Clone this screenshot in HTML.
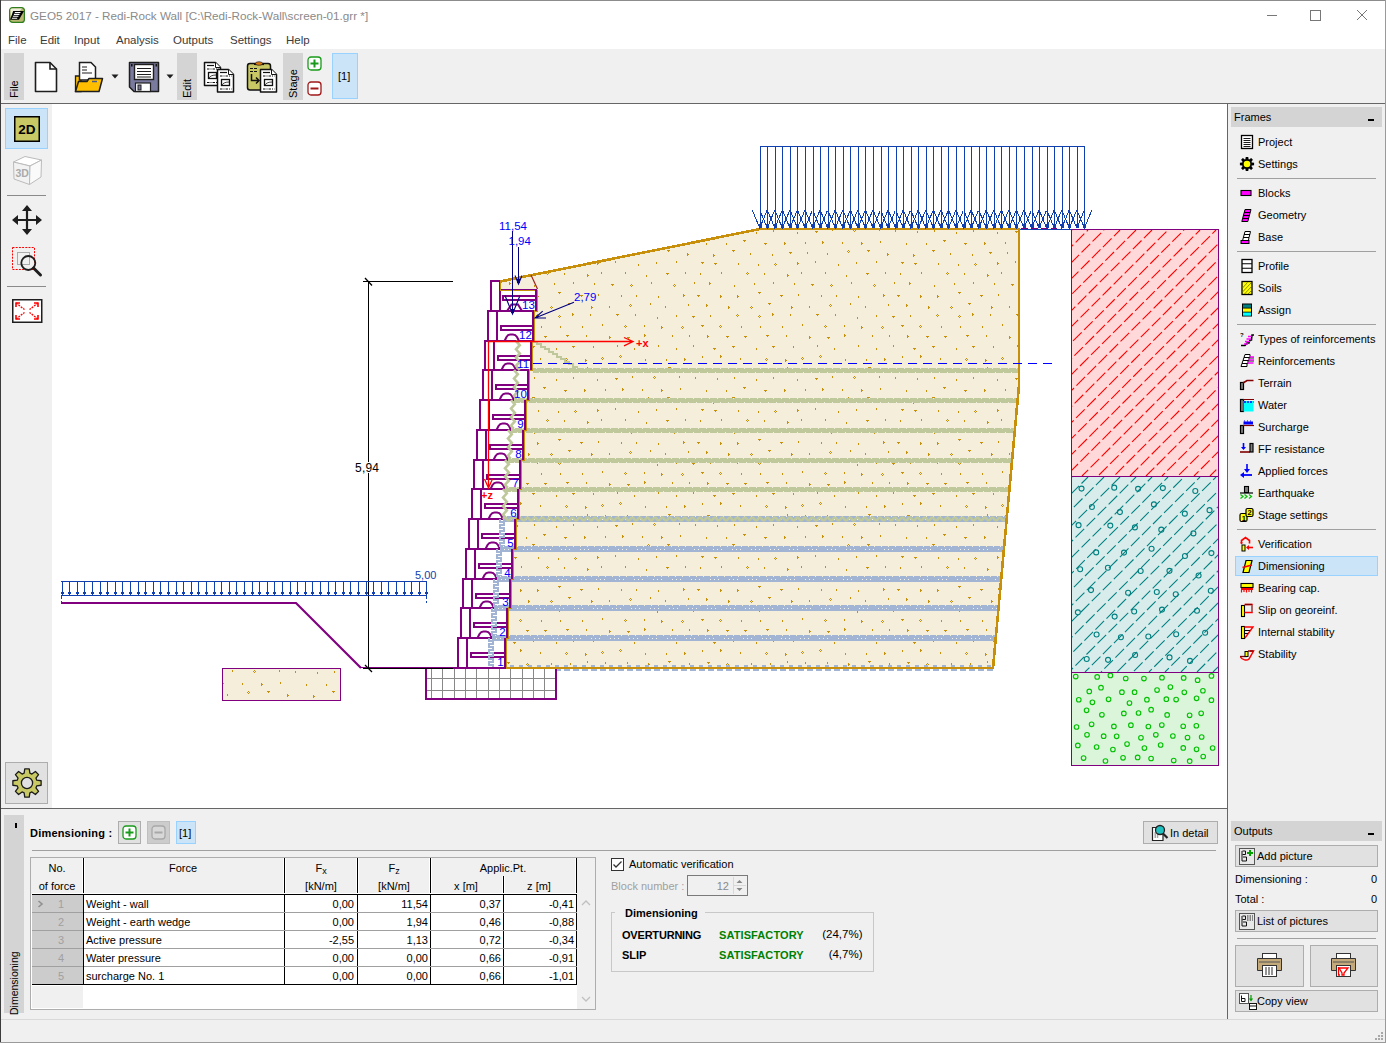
<!DOCTYPE html>
<html><head><meta charset="utf-8">
<style>
*{margin:0;padding:0;box-sizing:border-box}
html,body{width:1386px;height:1043px;overflow:hidden;background:#f0f0f0;font-family:"Liberation Sans",sans-serif;font-size:11px;color:#000}
.a{position:absolute}
.t{position:absolute;white-space:nowrap;line-height:1}
.vt{position:absolute;transform-origin:0 0;transform:rotate(-90deg);white-space:nowrap;line-height:1}
</style></head><body>
<div class="a" style="left:0px;top:0px;width:1386px;height:1px;background:#8c8c8c;"></div><div class="a" style="left:0px;top:0px;width:1px;height:1043px;background:#3c3c3c;"></div><div class="a" style="left:1385px;top:0px;width:1px;height:1043px;background:#9a9a9a;"></div><div class="a" style="left:0px;top:1042px;width:1386px;height:1px;background:#9a9a9a;"></div><div class="a" style="left:1px;top:1px;width:1384px;height:48px;background:#fff;"></div><svg class="a" style="left:9px;top:7px;" width="16" height="16" viewBox="0 0 16 16"><rect x="0.6" y="0.6" width="14.8" height="14.8" rx="3" fill="#b8b870" stroke="#2e7d1e" stroke-width="1.2"/><path d="M1.5 2 Q1.5 1.5 3 1.5 H13 L2 13Z" fill="#eeeedf"/><path d="M4.2 4 H15 L10 12.8 H1Z" fill="#000"/><path d="M5.8 5.5 H11.5 M4.9 7.4 H10.5 M3.9 9.3 H9.4 M2.9 11.3 H8.2" stroke="#fff" stroke-width="1.1"/></svg><div class="t" style="left:30px;top:10.40px;font-size:11.7px;color:#8a8a8a">GEO5 2017 - Redi-Rock Wall [C:\Redi-Rock-Wall\screen-01.grr *]</div><svg class="a" style="left:1265px;top:8px;" width="110" height="16" viewBox="0 0 110 16"><path d="M2 7.5 H12" stroke="#777" stroke-width="1"/><rect x="45.5" y="2.5" width="10" height="10" fill="none" stroke="#777"/><path d="M92 2 L102 12 M102 2 L92 12" stroke="#777" stroke-width="1"/></svg><div class="t" style="left:8px;top:35.47px;font-size:11.5px;color:#3a3a3a">File</div><div class="t" style="left:40px;top:35.47px;font-size:11.5px;color:#3a3a3a">Edit</div><div class="t" style="left:74px;top:35.47px;font-size:11.5px;color:#3a3a3a">Input</div><div class="t" style="left:116px;top:35.47px;font-size:11.5px;color:#3a3a3a">Analysis</div><div class="t" style="left:173px;top:35.47px;font-size:11.5px;color:#3a3a3a">Outputs</div><div class="t" style="left:230px;top:35.47px;font-size:11.5px;color:#3a3a3a">Settings</div><div class="t" style="left:286px;top:35.47px;font-size:11.5px;color:#3a3a3a">Help</div><div class="a" style="left:1px;top:49px;width:1384px;height:54px;background:#f0f0f0;"></div><div class="a" style="left:1px;top:103px;width:1384px;height:1px;background:#666666;"></div><div class="a" style="left:4px;top:53px;width:20px;height:47px;background:#d4d4d4;"></div><div class="a" style="left:177px;top:53px;width:20px;height:47px;background:#d4d4d4;"></div><div class="a" style="left:283px;top:53px;width:20px;height:47px;background:#d4d4d4;"></div><div class="vt" style="left:9px;top:98px;font-size:11px">File</div><div class="vt" style="left:182px;top:98px;font-size:11px">Edit</div><div class="vt" style="left:288px;top:98px;font-size:11px">Stage</div><svg class="a" style="left:34px;top:61px;" width="24" height="32" viewBox="0 0 24 32"><path d="M1.5 1.5 H16 L22.5 8 V30.5 H1.5Z" fill="#fff" stroke="#1e1e1e" stroke-width="1.6" stroke-linejoin="round"/><path d="M16 1.5 V8 H22.5" fill="none" stroke="#1e1e1e" stroke-width="1.6"/></svg><svg class="a" style="left:74px;top:61px;" width="30" height="32" viewBox="0 0 30 32"><path d="M1.5 15 H7 V30.5 H1.5Z" fill="#ffbf00" stroke="#1e1e1e" stroke-width="1.3"/><path d="M5.5 1.5 H17 L21.5 6 V19 H5.5Z" fill="#fff" stroke="#1e1e1e" stroke-width="1.5"/><path d="M8 6 H13 M8 9 H13 M8 12 H18" stroke="#1e1e1e" stroke-width="1.2"/><path d="M4.5 20.5 H13 L15 17.5 H28.5 L25 30.5 H1.5Z" fill="#ffbf00" stroke="#1e1e1e" stroke-width="1.5" stroke-linejoin="round"/><path d="M18 20.5 H23" stroke="#4a5a8a" stroke-width="1.5"/></svg><svg class="a" style="left:111px;top:74px;" width="9" height="6" viewBox="0 0 9 6"><path d="M0.5 0.5 H7.5 L4 4.5Z" fill="#1e1e1e"/></svg><svg class="a" style="left:128px;top:61px;" width="32" height="32" viewBox="0 0 32 32"><path d="M1.5 1.5 H30.5 V30.5 H6 L1.5 26Z" fill="#7a7a9e" stroke="#1e1e1e" stroke-width="1.5" stroke-linejoin="round"/><rect x="6.5" y="3.5" width="19" height="15" fill="#fff" stroke="#1e1e1e" stroke-width="1.4"/><path d="M9 7.5 H23 M9 10.5 H23 M9 13.5 H23 M9 16 H23" stroke="#1e1e1e" stroke-width="1.1"/><rect x="7.5" y="22" width="15" height="8.5" fill="#fff" stroke="#1e1e1e" stroke-width="1.2"/><rect x="10" y="24" width="3" height="5" fill="#7a7a9e" stroke="#1e1e1e" stroke-width="1"/><rect x="3" y="3" width="1.6" height="2.5" fill="#111"/><rect x="27.5" y="3" width="1.6" height="2.5" fill="#111"/></svg><svg class="a" style="left:166px;top:74px;" width="9" height="6" viewBox="0 0 9 6"><path d="M0.5 0.5 H7.5 L4 4.5Z" fill="#1e1e1e"/></svg><svg class="a" style="left:203px;top:61px;" width="34" height="32" viewBox="0 0 34 32"><path d="M1.5 1.5 H12.5 L17.5 6.5 V24.5 H1.5 Z" fill="#fff" stroke="#111" stroke-width="1.5" stroke-linejoin="round"/><path d="M12.5 1.5 V6.5 H17.5" fill="#fff" stroke="#111" stroke-width="1"/><path d="M4.0 4.5 H11.0" stroke="#111" stroke-width="1.2"/><path d="M4.0 8.0 H15.5 M4.0 21.5 H15.5" stroke="#111" stroke-width="1.2" stroke-dasharray="2.5 1 1 1"/><rect x="5.5" y="11.5" width="8" height="6" fill="none" stroke="#111" stroke-width="1.3"/><path d="M6.0 17.0 Q7.5 14.0 13.5 14.0" fill="none" stroke="#111" stroke-width="0.8"/><path d="M14.5 8.5 H25.5 L30.5 13.5 V31.0 H14.5 Z" fill="#fff" stroke="#111" stroke-width="1.5" stroke-linejoin="round"/><path d="M25.5 8.5 V13.5 H30.5" fill="#fff" stroke="#111" stroke-width="1"/><path d="M17.0 11.5 H24.0" stroke="#111" stroke-width="1.2"/><path d="M17.0 15.0 H28.5 M17.0 28.0 H28.5" stroke="#111" stroke-width="1.2" stroke-dasharray="2.5 1 1 1"/><rect x="18.5" y="18.5" width="8" height="6" fill="none" stroke="#111" stroke-width="1.3"/><path d="M19.0 24.0 Q20.5 21.0 26.5 21.0" fill="none" stroke="#111" stroke-width="0.8"/></svg><svg class="a" style="left:246px;top:61px;" width="34" height="32" viewBox="0 0 34 32"><rect x="1.5" y="2.5" width="23" height="26.5" rx="2.5" fill="#c8c864" stroke="#111" stroke-width="1.5"/><path d="M8 3.5 H18" stroke="#111" stroke-width="1.2"/><ellipse cx="13" cy="2.5" rx="3.5" ry="1.8" fill="#d87810" stroke="#111" stroke-width="0.6"/><path d="M4 7.5 H11 M4 10.5 H11" stroke="#111" stroke-width="1.2" stroke-dasharray="3 1"/><path d="M5.5 13 V19.5 H13 M10 16.5 L13 19.5 L10 22.5" fill="none" stroke="#111" stroke-width="1.5"/><path d="M14.5 8.5 H25.5 L30.5 13.5 V31.0 H14.5 Z" fill="#fff" stroke="#111" stroke-width="1.5" stroke-linejoin="round"/><path d="M25.5 8.5 V13.5 H30.5" fill="#fff" stroke="#111" stroke-width="1"/><path d="M17.0 11.5 H24.0" stroke="#111" stroke-width="1.2"/><path d="M17.0 15.0 H28.5 M17.0 28.0 H28.5" stroke="#111" stroke-width="1.2" stroke-dasharray="2.5 1 1 1"/><rect x="18.5" y="18.5" width="8" height="6" fill="none" stroke="#111" stroke-width="1.3"/><path d="M19.0 24.0 Q20.5 21.0 26.5 21.0" fill="none" stroke="#111" stroke-width="0.8"/></svg><svg class="a" style="left:307px;top:56px;" width="16" height="16" viewBox="0 0 16 16"><rect x="1" y="1" width="13" height="13" rx="3" fill="#fff" stroke="#1a9a1a" stroke-width="1.3"/><path d="M7.5 3.5 V11.5 M3.5 7.5 H11.5" stroke="#1a9a1a" stroke-width="2"/></svg><svg class="a" style="left:307px;top:81px;" width="16" height="16" viewBox="0 0 16 16"><rect x="1" y="1" width="13" height="13" rx="3" fill="#fff" stroke="#a01818" stroke-width="1.3"/><path d="M3.5 7.5 H11.5" stroke="#a01818" stroke-width="2"/></svg><div class="a" style="left:332px;top:53px;width:26px;height:46px;background:#cce4f7;border:1px solid #99d1ff"></div><div class="t" style="left:338px;top:71.19px;font-size:11px;">[1]</div><div class="a" style="left:1px;top:104px;width:51px;height:704px;background:#f0f0f0;"></div><div class="a" style="left:5px;top:108px;width:43px;height:41px;background:#cce4f7;border:1px solid #99d1ff"></div><svg class="a" style="left:14px;top:116px;" width="27" height="27" viewBox="0 0 27 27"><rect x="0.75" y="0.75" width="24.5" height="24.5" fill="#c8c864" stroke="#000" stroke-width="1.5"/><text x="13" y="18" text-anchor="middle" font-family="Liberation Sans" font-weight="bold" font-size="13.5" fill="#000">2D</text></svg><svg class="a" style="left:12px;top:155px;" width="31" height="32" viewBox="0 0 31 32"><path d="M1.5 7 L13 1.5 L29.5 5 L18 11Z" fill="#fff" stroke="#bbb" stroke-width="1"/><path d="M1.5 7 L18 11 L17.5 29.5 L2 24Z" fill="#f2f2f2" stroke="#bbb" stroke-width="1"/><path d="M18 11 L29.5 5 L29 22 L17.5 29.5Z" fill="#fafafa" stroke="#bbb" stroke-width="1"/><text x="3.5" y="22" font-family="Liberation Sans" font-weight="bold" font-size="10.5" fill="#aaa">3D</text></svg><div class="a" style="left:7px;top:195px;width:39px;height:1px;background:#8a8a8a;"></div><svg class="a" style="left:12px;top:205px;" width="30" height="30" viewBox="0 0 30 30"><path d="M15 2 V28 M2 15 H28" stroke="#1e1e1e" stroke-width="2.2"/><path d="M15 0 L20 6 H10Z M15 30 L20 24 H10Z M0 15 L6 10 V20Z M30 15 L24 10 V20Z" fill="#1e1e1e"/></svg><svg class="a" style="left:12px;top:247px;" width="31" height="31" viewBox="0 0 31 31"><rect x="0.5" y="0.5" width="22" height="22" fill="none" stroke="#ff0000" stroke-width="1" stroke-dasharray="2 1.2"/><rect x="5.5" y="5.5" width="12" height="12" fill="none" stroke="#aaa" stroke-width="1"/><circle cx="16.3" cy="16" r="7" fill="none" stroke="#1e1e1e" stroke-width="1.8"/><path d="M21.5 21 L28.5 28" stroke="#1e1e1e" stroke-width="3" stroke-linecap="round"/></svg><div class="a" style="left:7px;top:286px;width:39px;height:1px;background:#8a8a8a;"></div><svg class="a" style="left:12px;top:299px;" width="31" height="25" viewBox="0 0 31 25"><rect x="0.75" y="0.75" width="29" height="22.5" fill="#fff" stroke="#1e1e1e" stroke-width="1.5"/><path d="M4 4 L12.5 10.5 M26 4 L17.5 10.5 M4 20 L12.5 13.5 M26 20 L17.5 13.5" stroke="#ff0000" stroke-width="1.3" stroke-dasharray="2 1"/><path d="M4 3.5 V8 M3.5 4 H8 M26 3.5 V8 M26.5 4 H22 M4 20.5 V16 M3.5 20 H8 M26 20.5 V16 M26.5 20 H22" stroke="#ff0000" stroke-width="1.6"/></svg><div class="a" style="left:5px;top:762px;width:43px;height:42px;background:#e1e1e1;border:1px solid #adadad"></div><svg class="a" style="left:11px;top:767px;" width="32" height="32" viewBox="0 0 32 32"><path d="M25.79 13.15 L30.12 13.76 L30.12 18.24 L25.79 18.85 L24.94 20.91 L27.57 24.41 L24.41 27.57 L20.91 24.94 L18.85 25.79 L18.24 30.12 L13.76 30.12 L13.15 25.79 L11.09 24.94 L7.59 27.57 L4.43 24.41 L7.06 20.91 L6.21 18.85 L1.88 18.24 L1.88 13.76 L6.21 13.15 L7.06 11.09 L4.43 7.59 L7.59 4.43 L11.09 7.06 L13.15 6.21 L13.76 1.88 L18.24 1.88 L18.85 6.21 L20.91 7.06 L24.41 4.43 L27.57 7.59 L24.94 11.09Z M16 16 m-5.6 0 a5.6 5.6 0 1 0 11.2 0 a5.6 5.6 0 1 0 -11.2 0Z" fill="#c8c864" stroke="#1a1a1a" stroke-width="1.3" stroke-linejoin="round" fill-rule="evenodd"/></svg><div class="a" style="left:52px;top:104px;width:1175px;height:704px;background:#fff;"></div><svg class="a" style="left:0;top:0" width="1386" height="1043" viewBox="0 0 1386 1043" font-family="Liberation Sans, sans-serif"><defs><pattern id="soil" patternUnits="userSpaceOnUse" x="0" y="0" width="200" height="147"><rect width="200" height="147" fill="#f5eedb"/><g fill="#c8900a"><rect x="198" y="0" width="1" height="2"/><rect x="21" y="1" width="1" height="2"/><rect x="36" y="1" width="1" height="2"/><rect x="58" y="2" width="1" height="2"/><path d="M83 0h1v3h-1z M84 1h1v1h-1z"/><path d="M97 1h3v1h-1v1h-1v-1h-1z"/><path d="M120 1h1v3h-1z M121 2h1v1h-1z"/><path d="M137 1h1v3h-1z M138 2h1v1h-1z"/><path d="M158 145h3v1h-1v1h-1v-1h-1z"/><path d="M180 1h3v1h-1v1h-1v-1h-1z"/><rect x="9" y="12" width="1" height="2"/><path d="M30 10h1v1h-1z M29 11h1v1h-1z M31 11h1v1h-1z M30 12h1v1h-1z"/><rect x="50" y="9" width="1" height="2"/><rect x="65" y="12" width="1" height="2"/><rect x="88" y="10" width="1" height="2"/><path d="M106 10h1v3h-1z M107 11h1v1h-1z"/><path d="M128 12h1v3h-1z M129 13h1v1h-1z"/><path d="M151 12h1v1h-1z M150 13h1v1h-1z M152 13h1v1h-1z M151 14h1v1h-1z"/><path d="M168 9h3v1h-1v1h-1v-1h-1z"/><path d="M191 12h1v3h-1z M192 13h1v1h-1z"/><path d="M16 20h3v1h-1v1h-1v-1h-1z"/><rect x="35" y="20" width="1" height="2"/><rect x="57" y="23" width="1" height="2"/><rect x="76" y="21" width="1" height="2"/><path d="M92 22h3v1h-1v1h-1v-1h-1z"/><rect x="110" y="21" width="1" height="2"/><path d="M137 20h1v1h-1z M136 21h1v1h-1z M138 21h1v1h-1z M137 22h1v1h-1z"/><path d="M159 21h1v1h-1z M158 22h1v1h-1z M160 22h1v1h-1z M159 23h1v1h-1z"/><path d="M172 19h1v3h-1z M173 20h1v1h-1z"/><rect x="190" y="20" width="1" height="2"/><rect x="2" y="30" width="1" height="2"/><path d="M25 31h1v1h-1z M24 32h1v1h-1z M26 32h1v1h-1z M25 33h1v1h-1z"/><rect x="44" y="31" width="1" height="2"/><path d="M61 32h1v3h-1z M62 33h1v1h-1z"/><path d="M82 32h1v1h-1z M81 33h1v1h-1z M83 33h1v1h-1z M82 34h1v1h-1z"/><path d="M101 31h3v1h-1v1h-1v-1h-1z"/><path d="M120 31h1v1h-1z M119 32h1v1h-1z M121 32h1v1h-1z M120 33h1v1h-1z"/><rect x="141" y="32" width="1" height="2"/><rect x="160" y="32" width="1" height="2"/><rect x="182" y="32" width="1" height="2"/><path d="M9 42h1v3h-1z M10 43h1v1h-1z"/><path d="M27 43h3v1h-1v1h-1v-1h-1z"/><path d="M44 40h1v3h-1z M45 41h1v1h-1z"/><rect x="72" y="41" width="1" height="2"/><rect x="89" y="41" width="1" height="2"/><path d="M107 41h1v3h-1z M108 42h1v1h-1z"/><path d="M126 42h3v1h-1v1h-1v-1h-1z"/><path d="M144 42h3v1h-1v1h-1v-1h-1z"/><path d="M166 41h3v1h-1v1h-1v-1h-1z"/><rect x="186" y="41" width="1" height="2"/><rect x="17" y="51" width="1" height="2"/><rect x="34" y="54" width="1" height="2"/><rect x="58" y="51" width="1" height="2"/><rect x="76" y="54" width="1" height="2"/><rect x="93" y="51" width="1" height="2"/><path d="M113 54h3v1h-1v1h-1v-1h-1z"/><path d="M132 52h3v1h-1v1h-1v-1h-1z"/><rect x="156" y="54" width="1" height="2"/><path d="M172 52h3v1h-1v1h-1v-1h-1z"/><rect x="193" y="52" width="1" height="2"/><path d="M2 63h1v1h-1z M1 64h1v1h-1z M3 64h1v1h-1z M2 65h1v1h-1z"/><path d="M20 61h1v1h-1z M19 62h1v1h-1z M21 62h1v1h-1z M20 63h1v1h-1z"/><rect x="45" y="65" width="1" height="2"/><rect x="66" y="65" width="1" height="2"/><path d="M84 64h1v3h-1z M85 65h1v1h-1z"/><rect x="102" y="62" width="1" height="2"/><path d="M120 61h1v3h-1z M121 62h1v1h-1z"/><rect x="140" y="64" width="1" height="2"/><path d="M166 64h1v1h-1z M165 65h1v1h-1z M167 65h1v1h-1z M166 66h1v1h-1z"/><path d="M185 65h1v3h-1z M186 66h1v1h-1z"/><rect x="5" y="74" width="1" height="2"/><rect x="27" y="74" width="1" height="2"/><path d="M48 75h1v3h-1z M49 76h1v1h-1z"/><path d="M68 73h3v1h-1v1h-1v-1h-1z"/><rect x="89" y="75" width="1" height="2"/><path d="M107 74h3v1h-1v1h-1v-1h-1z"/><path d="M127 75h1v1h-1z M126 76h1v1h-1z M128 76h1v1h-1z M127 77h1v1h-1z"/><rect x="151" y="75" width="1" height="2"/><rect x="170" y="75" width="1" height="2"/><rect x="187" y="73" width="1" height="2"/><path d="M15 84h3v1h-1v1h-1v-1h-1z"/><rect x="32" y="82" width="1" height="2"/><path d="M54 82h1v1h-1z M53 83h1v1h-1z M55 83h1v1h-1z M54 84h1v1h-1z"/><rect x="79" y="82" width="1" height="2"/><rect x="95" y="83" width="1" height="2"/><rect x="117" y="84" width="1" height="2"/><rect x="134" y="83" width="1" height="2"/><rect x="156" y="85" width="1" height="2"/><rect x="173" y="83" width="1" height="2"/><rect x="197" y="85" width="1" height="2"/><rect x="5" y="95" width="1" height="2"/><path d="M22 94h1v3h-1z M23 95h1v1h-1z"/><rect x="42" y="95" width="1" height="2"/><path d="M61 95h1v3h-1z M62 96h1v1h-1z"/><rect x="80" y="94" width="1" height="2"/><rect x="106" y="96" width="1" height="2"/><rect x="126" y="96" width="1" height="2"/><path d="M143 93h3v1h-1v1h-1v-1h-1z"/><path d="M164 96h3v1h-1v1h-1v-1h-1z"/><path d="M184 95h1v3h-1z M185 96h1v1h-1z"/><rect x="7" y="105" width="1" height="2"/><rect x="27" y="106" width="1" height="2"/><path d="M48 103h1v1h-1z M47 104h1v1h-1z M49 104h1v1h-1z M48 105h1v1h-1z"/><path d="M67 103h3v1h-1v1h-1v-1h-1z"/><path d="M87 106h1v3h-1z M88 107h1v1h-1z"/><path d="M113 107h1v3h-1z M114 108h1v1h-1z"/><path d="M132 103h3v1h-1v1h-1v-1h-1z"/><rect x="150" y="106" width="1" height="2"/><rect x="172" y="107" width="1" height="2"/><path d="M189 105h3v1h-1v1h-1v-1h-1z"/><rect x="15" y="114" width="1" height="2"/><rect x="38" y="117" width="1" height="2"/><rect x="56" y="115" width="1" height="2"/><rect x="76" y="114" width="1" height="2"/><path d="M101 115h3v1h-1v1h-1v-1h-1z"/><path d="M114 116h3v1h-1v1h-1v-1h-1z"/><rect x="138" y="116" width="1" height="2"/><rect x="158" y="117" width="1" height="2"/><path d="M175 116h1v1h-1z M174 117h1v1h-1z M176 117h1v1h-1z M175 118h1v1h-1z"/><path d="M197 115h1v3h-1z M198 116h1v1h-1z"/><rect x="1" y="125" width="1" height="2"/><rect x="25" y="125" width="1" height="2"/><rect x="46" y="128" width="1" height="2"/><path d="M66 126h3v1h-1v1h-1v-1h-1z"/><rect x="85" y="125" width="1" height="2"/><rect x="100" y="126" width="1" height="2"/><rect x="121" y="125" width="1" height="2"/><path d="M147 125h1v1h-1z M146 126h1v1h-1z M148 126h1v1h-1z M147 127h1v1h-1z"/><rect x="164" y="126" width="1" height="2"/><path d="M187 127h1v3h-1z M188 128h1v1h-1z"/><path d="M11 137h3v1h-1v1h-1v-1h-1z"/><path d="M31 137h1v1h-1z M30 138h1v1h-1z M32 138h1v1h-1z M31 139h1v1h-1z"/><rect x="51" y="135" width="1" height="2"/><path d="M74 137h1v1h-1z M73 138h1v1h-1z M75 138h1v1h-1z M74 139h1v1h-1z"/><rect x="94" y="135" width="1" height="2"/><path d="M109 135h1v3h-1z M110 136h1v1h-1z"/><rect x="134" y="138" width="1" height="2"/><rect x="154" y="136" width="1" height="2"/><rect x="173" y="135" width="1" height="2"/><rect x="194" y="136" width="1" height="2"/></g></pattern><pattern id="pink" patternUnits="userSpaceOnUse" width="12" height="12"><rect width="12" height="12" fill="#ffd9d9"/><path d="M-3 15L15 -3" stroke="#ff0000" stroke-width="1.1" stroke-dasharray="8 4.5"/></pattern><pattern id="cyan" patternUnits="userSpaceOnUse" width="12" height="12"><rect width="12" height="12" fill="#d9ecec"/><path d="M-3 15L15 -3" stroke="#008080" stroke-width="1.1" stroke-dasharray="8 4.5"/></pattern><clipPath id="cv"><rect x="52" y="104" width="1175" height="704"/></clipPath></defs><g clip-path="url(#cv)" shape-rendering="crispEdges"><path d="M499 281 L760 229 L1019 229 L1019 385 L993 668 L506 668 L506 638 L508 638 L508 608 L511 608 L511 579 L513 579 L513 549 L516 549 L516 519 L519 519 L519 489 L521 489 L521 460 L524 460 L524 430 L526 430 L526 400 L529 400 L529 370 L532 370 L532 341 L534 341 L534 311 L537 311 L537 290 L499 290Z" fill="url(#soil)"/><rect x="222.5" y="668.5" width="118" height="32" fill="url(#soil)" stroke="#800080" stroke-width="1.5"/><path d="M492 670 H995" stroke="#a2b4d4" stroke-width="2" stroke-dasharray="6 3"/><path d="M492 666 H995" stroke="#a2b4d4" stroke-width="1.5" stroke-dasharray="4 5"/><path d="M533 342 H537 V344 H541 V347 H545 V349 H549 V352 H553 V354 H557 V357 H561 V359 H565 V362 H569 V364 H573 V367 H577 V369 H581 V372 H592" fill="none" stroke="#bec89a" stroke-width="2.5"/><rect x="458" y="638" width="47" height="30" fill="#fff" stroke="#800080" stroke-width="2"/><path d="M467 638 V668" stroke="#800080" stroke-width="2"/><path d="M471 653 H505 M471 657 H505 M471 652 V658" stroke="#800080" stroke-width="2" fill="none"/><rect x="461" y="608" width="46" height="30" fill="#fff" stroke="#800080" stroke-width="2"/><path d="M470 608 V638" stroke="#800080" stroke-width="2"/><path d="M474 623 H507 M474 627 H507 M474 622 V628" stroke="#800080" stroke-width="2" fill="none"/><path d="M477.5 638 L479.5 634 Q481 631.5 483.5 631.5 H486 Q488.5 631.5 490 634 L492 638" fill="none" stroke="#800080" stroke-width="2" shape-rendering="auto"/><rect x="463" y="579" width="47" height="29" fill="#fff" stroke="#800080" stroke-width="2"/><path d="M472 579 V608" stroke="#800080" stroke-width="2"/><path d="M476 594 H510 M476 598 H510 M476 593 V599" stroke="#800080" stroke-width="2" fill="none"/><path d="M479.5 608 L481.5 604 Q483 601.5 485.5 601.5 H488 Q490.5 601.5 492 604 L494 608" fill="none" stroke="#800080" stroke-width="2" shape-rendering="auto"/><rect x="466" y="549" width="46" height="30" fill="#fff" stroke="#800080" stroke-width="2"/><path d="M475 549 V579" stroke="#800080" stroke-width="2"/><path d="M479 564 H512 M479 568 H512 M479 563 V569" stroke="#800080" stroke-width="2" fill="none"/><path d="M482.5 579 L484.5 575 Q486 572.5 488.5 572.5 H491 Q493.5 572.5 495 575 L497 579" fill="none" stroke="#800080" stroke-width="2" shape-rendering="auto"/><rect x="469" y="519" width="46" height="30" fill="#fff" stroke="#800080" stroke-width="2"/><path d="M478 519 V549" stroke="#800080" stroke-width="2"/><path d="M482 534 H515 M482 538 H515 M482 533 V539" stroke="#800080" stroke-width="2" fill="none"/><path d="M485.5 549 L487.5 545 Q489 542.5 491.5 542.5 H494 Q496.5 542.5 498 545 L500 549" fill="none" stroke="#800080" stroke-width="2" shape-rendering="auto"/><rect x="472" y="489" width="46" height="30" fill="#fff" stroke="#800080" stroke-width="2"/><path d="M481 489 V519" stroke="#800080" stroke-width="2"/><path d="M485 504 H518 M485 508 H518 M485 503 V509" stroke="#800080" stroke-width="2" fill="none"/><path d="M488.5 519 L490.5 515 Q492 512.5 494.5 512.5 H497 Q499.5 512.5 501 515 L503 519" fill="none" stroke="#800080" stroke-width="2" shape-rendering="auto"/><rect x="474" y="460" width="46" height="29" fill="#fff" stroke="#800080" stroke-width="2"/><path d="M483 460 V489" stroke="#800080" stroke-width="2"/><path d="M487 475 H520 M487 479 H520 M487 474 V480" stroke="#800080" stroke-width="2" fill="none"/><path d="M490.5 489 L492.5 485 Q494 482.5 496.5 482.5 H499 Q501.5 482.5 503 485 L505 489" fill="none" stroke="#800080" stroke-width="2" shape-rendering="auto"/><rect x="477" y="430" width="46" height="30" fill="#fff" stroke="#800080" stroke-width="2"/><path d="M486 430 V460" stroke="#800080" stroke-width="2"/><path d="M490 445 H523 M490 449 H523 M490 444 V450" stroke="#800080" stroke-width="2" fill="none"/><path d="M493.5 460 L495.5 456 Q497 453.5 499.5 453.5 H502 Q504.5 453.5 506 456 L508 460" fill="none" stroke="#800080" stroke-width="2" shape-rendering="auto"/><rect x="480" y="400" width="45" height="30" fill="#fff" stroke="#800080" stroke-width="2"/><path d="M489 400 V430" stroke="#800080" stroke-width="2"/><path d="M493 415 H525 M493 419 H525 M493 414 V420" stroke="#800080" stroke-width="2" fill="none"/><path d="M496.5 430 L498.5 426 Q500 423.5 502.5 423.5 H505 Q507.5 423.5 509 426 L511 430" fill="none" stroke="#800080" stroke-width="2" shape-rendering="auto"/><rect x="483" y="370" width="45" height="30" fill="#fff" stroke="#800080" stroke-width="2"/><path d="M492 370 V400" stroke="#800080" stroke-width="2"/><path d="M496 385 H528 M496 389 H528 M496 384 V390" stroke="#800080" stroke-width="2" fill="none"/><path d="M499.5 400 L501.5 396 Q503 393.5 505.5 393.5 H508 Q510.5 393.5 512 396 L514 400" fill="none" stroke="#800080" stroke-width="2" shape-rendering="auto"/><rect x="485" y="341" width="46" height="29" fill="#fff" stroke="#800080" stroke-width="2"/><path d="M494 341 V370" stroke="#800080" stroke-width="2"/><path d="M498 356 H531 M498 360 H531 M498 355 V361" stroke="#800080" stroke-width="2" fill="none"/><path d="M501.5 370 L503.5 366 Q505 363.5 507.5 363.5 H510 Q512.5 363.5 514 366 L516 370" fill="none" stroke="#800080" stroke-width="2" shape-rendering="auto"/><rect x="488" y="311" width="45" height="30" fill="#fff" stroke="#800080" stroke-width="2"/><path d="M497 311 V341" stroke="#800080" stroke-width="2"/><path d="M501 326 H533 M501 330 H533 M501 325 V331" stroke="#800080" stroke-width="2" fill="none"/><path d="M504.5 341 L506.5 337 Q508 334.5 510.5 334.5 H513 Q515.5 334.5 517 337 L519 341" fill="none" stroke="#800080" stroke-width="2" shape-rendering="auto"/><path d="M489 638 V641 H493 V644 H489 V647 H493 V650 H489 V653 H493 V656 H489 V659 H493 V662 H489 V665 H493 V668 H489" fill="none" stroke="#a2b4d4" stroke-width="2"/><path d="M492 608 V611 H496 V614 H492 V617 H496 V620 H492 V623 H496 V626 H492 V629 H496 V632 H492 V635 H496 V638 H492" fill="none" stroke="#a2b4d4" stroke-width="2"/><path d="M494 579 V582 H498 V585 H494 V588 H498 V591 H494 V594 H498 V597 H494 V600 H498 V603 H494 V606 H498 V608 H494" fill="none" stroke="#a2b4d4" stroke-width="2"/><path d="M497 549 V552 H501 V555 H497 V558 H501 V561 H497 V564 H501 V567 H497 V570 H501 V573 H497 V576 H501 V579 H497" fill="none" stroke="#a2b4d4" stroke-width="2"/><path d="M500 519 V522 H504 V525 H500 V528 H504 V531 H500 V534 H504 V537 H500 V540 H504 V543 H500 V546 H504 V549 H500" fill="none" stroke="#a2b4d4" stroke-width="2"/><path d="M503 489 L506.8 493.29 L503 497.57 L506.8 501.86 L503 506.14 L506.8 510.43 L503 514.71 L506.8 519" fill="none" stroke="#bec89a" stroke-width="2.6" shape-rendering="auto"/><path d="M505 460 L508.8 464.14 L505 468.29 L508.8 472.43 L505 476.57 L508.8 480.71 L505 484.86 L508.8 489" fill="none" stroke="#bec89a" stroke-width="2.6" shape-rendering="auto"/><path d="M508 430 L511.8 434.29 L508 438.57 L511.8 442.86 L508 447.14 L511.8 451.43 L508 455.71 L511.8 460" fill="none" stroke="#bec89a" stroke-width="2.6" shape-rendering="auto"/><path d="M511 400 L514.8 404.29 L511 408.57 L514.8 412.86 L511 417.14 L514.8 421.43 L511 425.71 L514.8 430" fill="none" stroke="#bec89a" stroke-width="2.6" shape-rendering="auto"/><path d="M514 370 L517.8 374.29 L514 378.57 L517.8 382.86 L514 387.14 L517.8 391.43 L514 395.71 L517.8 400" fill="none" stroke="#bec89a" stroke-width="2.6" shape-rendering="auto"/><path d="M516 341 L519.8 345.14 L516 349.29 L519.8 353.43 L516 357.57 L519.8 361.71 L516 365.86 L519.8 370" fill="none" stroke="#bec89a" stroke-width="2.6" shape-rendering="auto"/><rect x="492" y="635" width="503.76" height="6" fill="#a2b4d4"/><path d="M496 638.5 H993.76" stroke="#f5f5f0" stroke-width="1" stroke-dasharray="1 3 1 3 1 10"/><path d="M495 635.5 H993.76" stroke="#f2eedc" stroke-width="1" stroke-dasharray="1 6"/><rect x="494" y="605" width="504.51" height="6" fill="#a2b4d4"/><path d="M498 608.5 H996.51" stroke="#f5f5f0" stroke-width="1" stroke-dasharray="1 3 1 3 1 10"/><path d="M497 605.5 H996.51" stroke="#f2eedc" stroke-width="1" stroke-dasharray="1 6"/><rect x="497" y="576" width="504.18" height="6" fill="#a2b4d4"/><path d="M501 579.5 H999.18" stroke="#f5f5f0" stroke-width="1" stroke-dasharray="1 3 1 3 1 10"/><path d="M500 576.5 H999.18" stroke="#f2eedc" stroke-width="1" stroke-dasharray="1 6"/><rect x="500" y="546" width="503.93" height="6" fill="#a2b4d4"/><path d="M504 549.5 H1001.93" stroke="#f5f5f0" stroke-width="1" stroke-dasharray="1 3 1 3 1 10"/><path d="M503 546.5 H1001.93" stroke="#f2eedc" stroke-width="1" stroke-dasharray="1 6"/><rect x="503" y="516" width="503.69" height="6" fill="#a2b4d4"/><path d="M507 519.5 H1004.69" stroke="#f5f5f0" stroke-width="1" stroke-dasharray="1 3 1 3 1 10"/><path d="M506 516.5 H1004.69" stroke="#f2eedc" stroke-width="1" stroke-dasharray="1 6"/><path d="M503 519 Q504.9 516 506.75 519 Q508.6 522 510.5 519 Q512.4 516 514.25 519 Q516.1 522 518 519 Q519.9 516 521.75 519 Q523.6 522 525.5 519 Q527.4 516 529.25 519 Q531.1 522 533 519 Q534.9 516 536.75 519 Q538.6 522 540.5 519 Q542.4 516 544.25 519 Q546.1 522 548 519 Q549.9 516 551.75 519 Q553.6 522 555.5 519 Q557.4 516 559.25 519 Q561.1 522 563 519 Q564.9 516 566.75 519 Q568.6 522 570.5 519 Q572.4 516 574.25 519 Q576.1 522 578 519 Q579.9 516 581.75 519 Q583.6 522 585.5 519 Q587.4 516 589.25 519 Q591.1 522 593 519 Q594.9 516 596.75 519 Q598.6 522 600.5 519 Q602.4 516 604.25 519 Q606.1 522 608 519 Q609.9 516 611.75 519 Q613.6 522 615.5 519 Q617.4 516 619.25 519 Q621.1 522 623 519 Q624.9 516 626.75 519 Q628.6 522 630.5 519 Q632.4 516 634.25 519 Q636.1 522 638 519 Q639.9 516 641.75 519 Q643.6 522 645.5 519 Q647.4 516 649.25 519 Q651.1 522 653 519 Q654.9 516 656.75 519 Q658.6 522 660.5 519 Q662.4 516 664.25 519 Q666.1 522 668 519 Q669.9 516 671.75 519 Q673.6 522 675.5 519 Q677.4 516 679.25 519 Q681.1 522 683 519 Q684.9 516 686.75 519 Q688.6 522 690.5 519 Q692.4 516 694.25 519 Q696.1 522 698 519 Q699.9 516 701.75 519 Q703.6 522 705.5 519 Q707.4 516 709.25 519 Q711.1 522 713 519 Q714.9 516 716.75 519 Q718.6 522 720.5 519 Q722.4 516 724.25 519 Q726.1 522 728 519 Q729.9 516 731.75 519 Q733.6 522 735.5 519 Q737.4 516 739.25 519 Q741.1 522 743 519 Q744.9 516 746.75 519 Q748.6 522 750.5 519 Q752.4 516 754.25 519 Q756.1 522 758 519 Q759.9 516 761.75 519 Q763.6 522 765.5 519 Q767.4 516 769.25 519 Q771.1 522 773 519 Q774.9 516 776.75 519 Q778.6 522 780.5 519 Q782.4 516 784.25 519 Q786.1 522 788 519 Q789.9 516 791.75 519 Q793.6 522 795.5 519 Q797.4 516 799.25 519 Q801.1 522 803 519 Q804.9 516 806.75 519 Q808.6 522 810.5 519 Q812.4 516 814.25 519 Q816.1 522 818 519 Q819.9 516 821.75 519 Q823.6 522 825.5 519 Q827.4 516 829.25 519 Q831.1 522 833 519 Q834.9 516 836.75 519 Q838.6 522 840.5 519 Q842.4 516 844.25 519 Q846.1 522 848 519 Q849.9 516 851.75 519 Q853.6 522 855.5 519 Q857.4 516 859.25 519 Q861.1 522 863 519 Q864.9 516 866.75 519 Q868.6 522 870.5 519 Q872.4 516 874.25 519 Q876.1 522 878 519 Q879.9 516 881.75 519 Q883.6 522 885.5 519 Q887.4 516 889.25 519 Q891.1 522 893 519 Q894.9 516 896.75 519 Q898.6 522 900.5 519 Q902.4 516 904.25 519 Q906.1 522 908 519 Q909.9 516 911.75 519 Q913.6 522 915.5 519 Q917.4 516 919.25 519 Q921.1 522 923 519 Q924.9 516 926.75 519 Q928.6 522 930.5 519 Q932.4 516 934.25 519 Q936.1 522 938 519 Q939.9 516 941.75 519 Q943.6 522 945.5 519 Q947.4 516 949.25 519 Q951.1 522 953 519 Q954.9 516 956.75 519 Q958.6 522 960.5 519 Q962.4 516 964.25 519 Q966.1 522 968 519 Q969.9 516 971.75 519 Q973.6 522 975.5 519 Q977.4 516 979.25 519 Q981.1 522 983 519 Q984.9 516 986.75 519 Q988.6 522 990.5 519 Q992.4 516 994.25 519 Q996.1 522 998 519 Q999.9 516 1001.75 519 Q1003.6 522 1005.5 519" fill="none" stroke="#bec89a" stroke-width="2.6" shape-rendering="auto"/><rect x="505" y="487" width="504.45" height="5" fill="#bec89a"/><path d="M508 487.5 H1007.45 M511 491.5 H1007.45" stroke="#f2eedc" stroke-width="1" stroke-dasharray="1 7"/><rect x="508" y="458" width="504.11" height="5" fill="#bec89a"/><path d="M511 458.5 H1010.11 M514 462.5 H1010.11" stroke="#f2eedc" stroke-width="1" stroke-dasharray="1 7"/><rect x="511" y="428" width="503.87" height="5" fill="#bec89a"/><path d="M514 428.5 H1012.87 M517 432.5 H1012.87" stroke="#f2eedc" stroke-width="1" stroke-dasharray="1 7"/><rect x="514" y="398" width="503.62" height="5" fill="#bec89a"/><path d="M517 398.5 H1015.62 M520 402.5 H1015.62" stroke="#f2eedc" stroke-width="1" stroke-dasharray="1 7"/><rect x="533" y="368" width="486" height="5" fill="#bec89a"/><path d="M536 368.5 H1017 M539 372.5 H1017" stroke="#f2eedc" stroke-width="1" stroke-dasharray="1 7"/><rect x="491" y="281" width="9" height="30" fill="#fff" stroke="#800080" stroke-width="2"/><rect x="500" y="290" width="36" height="21" fill="#fff" stroke="#800080" stroke-width="2"/><path d="M503 296 H536 M503 300 H536 M503 295 V301" stroke="#800080" stroke-width="2" fill="none"/><path d="M507 311 L511.5 304.5 H518 L522 311" fill="none" stroke="#800080" stroke-width="2" shape-rendering="auto"/><rect x="426" y="668" width="130" height="31" fill="#fff"/><path d="M431.5 669 V699 M442.5 669 V699 M454.5 669 V699 M465.5 669 V699 M476.5 669 V699 M488.5 669 V699 M499.5 669 V699 M510.5 669 V699 M522.5 669 V699 M533.5 669 V699 M544.5 669 V699 M427 678.5 H555 M427 690.5 H555" stroke="#888" stroke-width="1"/><rect x="426" y="668" width="130" height="31" fill="none" stroke="#800080" stroke-width="2"/><path d="M500 281.5 L760 229 L1019 229 L1019 385 L993 668 L506 668" fill="none" stroke="#c8900a" stroke-width="2.6"/><path d="M506.5 668 L506.5 638 L508.5 638 L508.5 608 L511.5 608 L511.5 579 L513.5 579 L513.5 549 L516.5 549 L516.5 519 L519.5 519 L519.5 489 L521.5 489 L521.5 460 L524.5 460 L524.5 430 L526.5 430 L526.5 400 L529.5 400 L529.5 370 L532.5 370 L532.5 341 L534.5 341 L534.5 311 L537.5 311 L537.5 290" fill="none" stroke="#c8900a" stroke-width="1.4"/><path d="M500 290.5 H536 M500.5 282 V290" stroke="#c8900a" stroke-width="1.2"/><path d="M505 638 V668" stroke="#800080" stroke-width="2"/><path d="M507 608 V638" stroke="#800080" stroke-width="2"/><path d="M510 579 V608" stroke="#800080" stroke-width="2"/><path d="M512 549 V579" stroke="#800080" stroke-width="2"/><path d="M515 519 V549" stroke="#800080" stroke-width="2"/><path d="M518 489 V519" stroke="#800080" stroke-width="2"/><path d="M520 460 V489" stroke="#800080" stroke-width="2"/><path d="M523 430 V460" stroke="#800080" stroke-width="2"/><path d="M525 400 V430" stroke="#800080" stroke-width="2"/><path d="M528 370 V400" stroke="#800080" stroke-width="2"/><path d="M531 341 V370" stroke="#800080" stroke-width="2"/><path d="M533 311 V341" stroke="#800080" stroke-width="2"/><path d="M536 290 V311" stroke="#800080" stroke-width="2"/><path d="M531 275 L537.5 289" stroke="#a02020" stroke-width="1.2" shape-rendering="auto"/><path d="M61 603 H296 L361 668" fill="none" stroke="#800080" stroke-width="2.2" shape-rendering="auto"/><path d="M361 667.5 H458" stroke="#800080" stroke-width="1"/><path d="M363 668.5 H453" stroke="#000" stroke-width="1"/><path d="M368.5 281 V668 M363 281.5 H453" stroke="#000" stroke-width="1.5"/><path d="M365 278 L372 285.5 M365 665 L372 672" stroke="#000" stroke-width="1.3" shape-rendering="auto"/><rect x="355" y="462" width="26" height="11" fill="#fff"/><text x="355" y="472" font-size="12" fill="#000" textLength="24">5,94</text><path d="M62.5 582 V595 M69.5 582 V595 M77.5 582 V595 M84.5 582 V595 M92.5 582 V595 M100.5 582 V595 M107.5 582 V595 M115.5 582 V595 M122.5 582 V595 M130.5 582 V595 M138.5 582 V595 M145.5 582 V595 M153.5 582 V595 M160.5 582 V595 M168.5 582 V595 M176.5 582 V595 M183.5 582 V595 M191.5 582 V595 M198.5 582 V595 M206.5 582 V595 M214.5 582 V595 M221.5 582 V595 M229.5 582 V595 M236.5 582 V595 M244.5 582 V595 M252.5 582 V595 M259.5 582 V595 M267.5 582 V595 M274.5 582 V595 M282.5 582 V595 M290.5 582 V595 M297.5 582 V595 M305.5 582 V595 M312.5 582 V595 M320.5 582 V595 M328.5 582 V595 M335.5 582 V595 M343.5 582 V595 M350.5 582 V595 M358.5 582 V595 M366.5 582 V595 M373.5 582 V595 M381.5 582 V595 M388.5 582 V595 M396.5 582 V595 M404.5 582 V595 M411.5 582 V595 M419.5 582 V595 M426.5 582 V595 M61 581.5 H427 M61 595.5 H427" stroke="#1040b0" stroke-width="1.2" fill="none"/><g fill="#1040b0"><rect x="61" y="592" width="3" height="2"/><rect x="68" y="592" width="3" height="2"/><rect x="76" y="592" width="3" height="2"/><rect x="83" y="592" width="3" height="2"/><rect x="91" y="592" width="3" height="2"/><rect x="99" y="592" width="3" height="2"/><rect x="106" y="592" width="3" height="2"/><rect x="114" y="592" width="3" height="2"/><rect x="121" y="592" width="3" height="2"/><rect x="129" y="592" width="3" height="2"/><rect x="137" y="592" width="3" height="2"/><rect x="144" y="592" width="3" height="2"/><rect x="152" y="592" width="3" height="2"/><rect x="159" y="592" width="3" height="2"/><rect x="167" y="592" width="3" height="2"/><rect x="175" y="592" width="3" height="2"/><rect x="182" y="592" width="3" height="2"/><rect x="190" y="592" width="3" height="2"/><rect x="197" y="592" width="3" height="2"/><rect x="205" y="592" width="3" height="2"/><rect x="213" y="592" width="3" height="2"/><rect x="220" y="592" width="3" height="2"/><rect x="228" y="592" width="3" height="2"/><rect x="235" y="592" width="3" height="2"/><rect x="243" y="592" width="3" height="2"/><rect x="251" y="592" width="3" height="2"/><rect x="258" y="592" width="3" height="2"/><rect x="266" y="592" width="3" height="2"/><rect x="273" y="592" width="3" height="2"/><rect x="281" y="592" width="3" height="2"/><rect x="289" y="592" width="3" height="2"/><rect x="296" y="592" width="3" height="2"/><rect x="304" y="592" width="3" height="2"/><rect x="311" y="592" width="3" height="2"/><rect x="319" y="592" width="3" height="2"/><rect x="327" y="592" width="3" height="2"/><rect x="334" y="592" width="3" height="2"/><rect x="342" y="592" width="3" height="2"/><rect x="349" y="592" width="3" height="2"/><rect x="357" y="592" width="3" height="2"/><rect x="365" y="592" width="3" height="2"/><rect x="372" y="592" width="3" height="2"/><rect x="380" y="592" width="3" height="2"/><rect x="387" y="592" width="3" height="2"/><rect x="395" y="592" width="3" height="2"/><rect x="403" y="592" width="3" height="2"/><rect x="410" y="592" width="3" height="2"/><rect x="418" y="592" width="3" height="2"/><rect x="425" y="592" width="3" height="2"/></g><path d="M61.5 596 V603 M426.5 596 V603" stroke="#1040b0" stroke-width="1" stroke-dasharray="3 2"/><text x="415" y="579" font-size="11" fill="#1040b0">5,00</text><path d="M760.5 146 V228 M767.5 146 V228 M775.5 146 V228 M782.5 146 V228 M790.5 146 V228 M797.5 146 V228 M805.5 146 V228 M813.5 146 V228 M820.5 146 V228 M828.5 146 V228 M835.5 146 V228 M843.5 146 V228 M850.5 146 V228 M858.5 146 V228 M865.5 146 V228 M873.5 146 V228 M881.5 146 V228 M888.5 146 V228 M896.5 146 V228 M903.5 146 V228 M911.5 146 V228 M918.5 146 V228 M926.5 146 V228 M933.5 146 V228 M941.5 146 V228 M948.5 146 V228 M956.5 146 V228 M964.5 146 V228 M971.5 146 V228 M979.5 146 V228 M986.5 146 V228 M994.5 146 V228 M1001.5 146 V228 M1009.5 146 V228 M1016.5 146 V228 M1024.5 146 V228 M1032.5 146 V228 M1039.5 146 V228 M1047.5 146 V228 M1054.5 146 V228 M1062.5 146 V228 M1069.5 146 V228 M1077.5 146 V228 M1084.5 146 V228 M759.5 146.5 H1085" stroke="#1040b0" stroke-width="1.2" fill="none"/><path d="M752.4 210.5 L759.7 228 L767 210.5 M759.95 210.5 L767.25 228 L774.55 210.5 M767.5 210.5 L774.8 228 L782.1 210.5 M775.05 210.5 L782.35 228 L789.65 210.5 M782.6 210.5 L789.9 228 L797.2 210.5 M790.16 210.5 L797.46 228 L804.76 210.5 M797.71 210.5 L805.01 228 L812.31 210.5 M805.26 210.5 L812.56 228 L819.86 210.5 M812.81 210.5 L820.11 228 L827.41 210.5 M820.36 210.5 L827.66 228 L834.96 210.5 M827.91 210.5 L835.21 228 L842.51 210.5 M835.46 210.5 L842.76 228 L850.06 210.5 M843.01 210.5 L850.31 228 L857.61 210.5 M850.57 210.5 L857.87 228 L865.17 210.5 M858.12 210.5 L865.42 228 L872.72 210.5 M865.67 210.5 L872.97 228 L880.27 210.5 M873.22 210.5 L880.52 228 L887.82 210.5 M880.77 210.5 L888.07 228 L895.37 210.5 M888.32 210.5 L895.62 228 L902.92 210.5 M895.87 210.5 L903.17 228 L910.47 210.5 M903.42 210.5 L910.72 228 L918.02 210.5 M910.97 210.5 L918.27 228 L925.57 210.5 M918.53 210.5 L925.83 228 L933.13 210.5 M926.08 210.5 L933.38 228 L940.68 210.5 M933.63 210.5 L940.93 228 L948.23 210.5 M941.18 210.5 L948.48 228 L955.78 210.5 M948.73 210.5 L956.03 228 L963.33 210.5 M956.28 210.5 L963.58 228 L970.88 210.5 M963.83 210.5 L971.13 228 L978.43 210.5 M971.38 210.5 L978.68 228 L985.98 210.5 M978.93 210.5 L986.23 228 L993.53 210.5 M986.49 210.5 L993.79 228 L1001.09 210.5 M994.04 210.5 L1001.34 228 L1008.64 210.5 M1001.59 210.5 L1008.89 228 L1016.19 210.5 M1009.14 210.5 L1016.44 228 L1023.74 210.5 M1016.69 210.5 L1023.99 228 L1031.29 210.5 M1024.24 210.5 L1031.54 228 L1038.84 210.5 M1031.79 210.5 L1039.09 228 L1046.39 210.5 M1039.34 210.5 L1046.64 228 L1053.94 210.5 M1046.9 210.5 L1054.2 228 L1061.5 210.5 M1054.45 210.5 L1061.75 228 L1069.05 210.5 M1062 210.5 L1069.3 228 L1076.6 210.5 M1069.55 210.5 L1076.85 228 L1084.15 210.5 M1077.1 210.5 L1084.4 228 L1091.7 210.5" stroke="#1040b0" stroke-width="1" fill="none"/><g fill="#1040b0"><rect x="759" y="224" width="3" height="4"/><rect x="766" y="224" width="3" height="4"/><rect x="774" y="224" width="3" height="4"/><rect x="781" y="224" width="3" height="4"/><rect x="789" y="224" width="3" height="4"/><rect x="796" y="224" width="3" height="4"/><rect x="804" y="224" width="3" height="4"/><rect x="812" y="224" width="3" height="4"/><rect x="819" y="224" width="3" height="4"/><rect x="827" y="224" width="3" height="4"/><rect x="834" y="224" width="3" height="4"/><rect x="842" y="224" width="3" height="4"/><rect x="849" y="224" width="3" height="4"/><rect x="857" y="224" width="3" height="4"/><rect x="864" y="224" width="3" height="4"/><rect x="872" y="224" width="3" height="4"/><rect x="880" y="224" width="3" height="4"/><rect x="887" y="224" width="3" height="4"/><rect x="895" y="224" width="3" height="4"/><rect x="902" y="224" width="3" height="4"/><rect x="910" y="224" width="3" height="4"/><rect x="917" y="224" width="3" height="4"/><rect x="925" y="224" width="3" height="4"/><rect x="932" y="224" width="3" height="4"/><rect x="940" y="224" width="3" height="4"/><rect x="947" y="224" width="3" height="4"/><rect x="955" y="224" width="3" height="4"/><rect x="963" y="224" width="3" height="4"/><rect x="970" y="224" width="3" height="4"/><rect x="978" y="224" width="3" height="4"/><rect x="985" y="224" width="3" height="4"/><rect x="993" y="224" width="3" height="4"/><rect x="1000" y="224" width="3" height="4"/><rect x="1008" y="224" width="3" height="4"/><rect x="1015" y="224" width="3" height="4"/><rect x="1023" y="224" width="3" height="4"/><rect x="1031" y="224" width="3" height="4"/><rect x="1038" y="224" width="3" height="4"/><rect x="1046" y="224" width="3" height="4"/><rect x="1053" y="224" width="3" height="4"/><rect x="1061" y="224" width="3" height="4"/><rect x="1068" y="224" width="3" height="4"/><rect x="1076" y="224" width="3" height="4"/><rect x="1083" y="224" width="3" height="4"/></g><path d="M1020 229.5 H1072" stroke="#1040b0" stroke-width="1"/><path d="M1021 228.5 H1057" stroke="#800080" stroke-width="1" stroke-dasharray="7 3"/><path d="M533 363.5 H1055" stroke="#0000ff" stroke-width="1.6" stroke-dasharray="9 6"/><path d="M488.5 341.5 H633 M624 337.5 L633 341.5 L624 345.8 M488.5 341.5 V488 M484.5 479 L488.5 488 L492.5 479" stroke="#ff0000" stroke-width="1.3" fill="none" shape-rendering="auto"/><text x="636" y="346.5" font-size="11" font-weight="bold" fill="#ff0000">+x</text><text x="481" y="499" font-size="11" font-weight="bold" fill="#ff0000">+z</text><clipPath id="c1"><rect x="1072" y="230" width="146" height="246"/></clipPath><clipPath id="c2"><rect x="1072" y="477" width="146" height="195"/></clipPath><rect x="1071.5" y="229.5" width="146.5" height="247" fill="#ffd9d9"/><g clip-path="url(#c1)" stroke="#ff0000" stroke-width="1.1" stroke-dasharray="12.2 3.4" shape-rendering="auto"><path d="M826 476 L1072 230" stroke-dashoffset="2.02"/><path d="M842 476 L1088 230" stroke-dashoffset="12.71"/><path d="M858 476 L1104 230" stroke-dashoffset="11.46"/><path d="M874 476 L1120 230" stroke-dashoffset="3.83"/><path d="M890 476 L1136 230" stroke-dashoffset="7.43"/><path d="M906 476 L1152 230" stroke-dashoffset="6.74"/><path d="M922 476 L1168 230" stroke-dashoffset="9.77"/><path d="M938 476 L1184 230" stroke-dashoffset="11.83"/><path d="M954 476 L1200 230" stroke-dashoffset="1.41"/><path d="M970 476 L1216 230" stroke-dashoffset="0.43"/><path d="M986 476 L1232 230" stroke-dashoffset="12.54"/><path d="M1002 476 L1248 230" stroke-dashoffset="6.49"/><path d="M1018 476 L1264 230" stroke-dashoffset="11.43"/><path d="M1034 476 L1280 230" stroke-dashoffset="0.03"/><path d="M1050 476 L1296 230" stroke-dashoffset="6.68"/><path d="M1066 476 L1312 230" stroke-dashoffset="10.82"/><path d="M1082 476 L1328 230" stroke-dashoffset="3.43"/><path d="M1098 476 L1344 230" stroke-dashoffset="14.18"/><path d="M1114 476 L1360 230" stroke-dashoffset="13.52"/><path d="M1130 476 L1376 230" stroke-dashoffset="0.46"/><path d="M1146 476 L1392 230" stroke-dashoffset="0.38"/><path d="M1162 476 L1408 230" stroke-dashoffset="8.12"/><path d="M1178 476 L1424 230" stroke-dashoffset="14.09"/><path d="M1194 476 L1440 230" stroke-dashoffset="5.72"/><path d="M1210 476 L1456 230" stroke-dashoffset="3.25"/></g><rect x="1071.5" y="476.5" width="146.5" height="196" fill="#d9ecec"/><g clip-path="url(#c2)" stroke="#008080" stroke-width="1.1" stroke-dasharray="12.2 3.4" shape-rendering="auto"><path d="M877 672 L1072 477" stroke-dashoffset="14.34"/><path d="M893 672 L1088 477" stroke-dashoffset="14.22"/><path d="M909 672 L1104 477" stroke-dashoffset="0.85"/><path d="M925 672 L1120 477" stroke-dashoffset="1.27"/><path d="M941 672 L1136 477" stroke-dashoffset="12.53"/><path d="M957 672 L1152 477" stroke-dashoffset="11.04"/><path d="M973 672 L1168 477" stroke-dashoffset="10.05"/><path d="M989 672 L1184 477" stroke-dashoffset="4.62"/><path d="M1005 672 L1200 477" stroke-dashoffset="9.09"/><path d="M1021 672 L1216 477" stroke-dashoffset="9.1"/><path d="M1037 672 L1232 477" stroke-dashoffset="8.72"/><path d="M1053 672 L1248 477" stroke-dashoffset="2.38"/><path d="M1069 672 L1264 477" stroke-dashoffset="6.46"/><path d="M1085 672 L1280 477" stroke-dashoffset="5.9"/><path d="M1101 672 L1296 477" stroke-dashoffset="10.85"/><path d="M1117 672 L1312 477" stroke-dashoffset="14.92"/><path d="M1133 672 L1328 477" stroke-dashoffset="14.24"/><path d="M1149 672 L1344 477" stroke-dashoffset="8.16"/><path d="M1165 672 L1360 477" stroke-dashoffset="6.67"/><path d="M1181 672 L1376 477" stroke-dashoffset="4.02"/><path d="M1197 672 L1392 477" stroke-dashoffset="0.54"/><path d="M1213 672 L1408 477" stroke-dashoffset="0.41"/></g><rect x="1071.5" y="672.5" width="146.5" height="92.5" fill="#daf5da"/><g fill="none" stroke="#008080" stroke-width="1.1" shape-rendering="auto"><circle cx="1081.52" cy="488.6" r="2.5"/><circle cx="1114.24" cy="487.66" r="2.5"/><circle cx="1138.08" cy="488.87" r="2.5"/><circle cx="1162.85" cy="488.12" r="2.5"/><circle cx="1195.3" cy="490.93" r="2.5"/><circle cx="1091.94" cy="507.03" r="2.5"/><circle cx="1119.91" cy="512.1" r="2.5"/><circle cx="1153.93" cy="504.42" r="2.5"/><circle cx="1184.82" cy="513.65" r="2.5"/><circle cx="1209.54" cy="510.16" r="2.5"/><circle cx="1078.57" cy="525.15" r="2.5"/><circle cx="1110.28" cy="525.6" r="2.5"/><circle cx="1134.9" cy="527.42" r="2.5"/><circle cx="1161.3" cy="529.64" r="2.5"/><circle cx="1193.41" cy="533.42" r="2.5"/><circle cx="1096.19" cy="552.4" r="2.5"/><circle cx="1124" cy="552.62" r="2.5"/><circle cx="1151.57" cy="548.78" r="2.5"/><circle cx="1184.98" cy="555.96" r="2.5"/><circle cx="1211.4" cy="553.08" r="2.5"/><circle cx="1080.15" cy="569.3" r="2.5"/><circle cx="1107.89" cy="567.7" r="2.5"/><circle cx="1140.66" cy="571" r="2.5"/><circle cx="1169.47" cy="570.87" r="2.5"/><circle cx="1198.58" cy="575.47" r="2.5"/><circle cx="1091.01" cy="590.1" r="2.5"/><circle cx="1128.1" cy="592.7" r="2.5"/><circle cx="1156.8" cy="591.97" r="2.5"/><circle cx="1175.73" cy="594.29" r="2.5"/><circle cx="1210.79" cy="590.7" r="2.5"/><circle cx="1077.87" cy="612.33" r="2.5"/><circle cx="1114.64" cy="616.58" r="2.5"/><circle cx="1134.18" cy="611.46" r="2.5"/><circle cx="1162.01" cy="609.6" r="2.5"/><circle cx="1196.97" cy="610.78" r="2.5"/><circle cx="1096.59" cy="634.47" r="2.5"/><circle cx="1120.91" cy="637.32" r="2.5"/><circle cx="1148.31" cy="636.44" r="2.5"/><circle cx="1176.17" cy="634.21" r="2.5"/><circle cx="1205.13" cy="632.7" r="2.5"/><circle cx="1086.71" cy="659.03" r="2.5"/><circle cx="1108.04" cy="659.85" r="2.5"/><circle cx="1135.11" cy="654.94" r="2.5"/><circle cx="1169.54" cy="657.42" r="2.5"/><circle cx="1190" cy="660.89" r="2.5"/></g><g fill="none" stroke="#00c000" stroke-width="1.1" shape-rendering="auto"><circle cx="1075.71" cy="676.55" r="2.3"/><circle cx="1097.18" cy="676.97" r="2.3"/><circle cx="1110.37" cy="675.44" r="2.3"/><circle cx="1125.72" cy="678.5" r="2.3"/><circle cx="1143.94" cy="678.61" r="2.3"/><circle cx="1161.97" cy="677.72" r="2.3"/><circle cx="1183.67" cy="677.9" r="2.3"/><circle cx="1197.6" cy="680.2" r="2.3"/><circle cx="1211.46" cy="675.92" r="2.3"/><circle cx="1089.27" cy="691.41" r="2.3"/><circle cx="1101" cy="687.64" r="2.3"/><circle cx="1121.92" cy="692.14" r="2.3"/><circle cx="1134.57" cy="692.2" r="2.3"/><circle cx="1157.06" cy="690.12" r="2.3"/><circle cx="1170.37" cy="687.12" r="2.3"/><circle cx="1184.31" cy="692.28" r="2.3"/><circle cx="1202.91" cy="690.73" r="2.3"/><circle cx="1078.77" cy="699.76" r="2.3"/><circle cx="1092.4" cy="702.32" r="2.3"/><circle cx="1108.55" cy="699.37" r="2.3"/><circle cx="1129.47" cy="703.11" r="2.3"/><circle cx="1146.91" cy="699.68" r="2.3"/><circle cx="1166.34" cy="699.22" r="2.3"/><circle cx="1176.13" cy="699.62" r="2.3"/><circle cx="1196.57" cy="698.36" r="2.3"/><circle cx="1211.41" cy="700.21" r="2.3"/><circle cx="1086.58" cy="710.29" r="2.3"/><circle cx="1101.9" cy="714.85" r="2.3"/><circle cx="1123.84" cy="713.44" r="2.3"/><circle cx="1138.53" cy="713.01" r="2.3"/><circle cx="1151.12" cy="709.71" r="2.3"/><circle cx="1167.14" cy="714.96" r="2.3"/><circle cx="1189.61" cy="715.28" r="2.3"/><circle cx="1201.17" cy="713.32" r="2.3"/><circle cx="1076.55" cy="727" r="2.3"/><circle cx="1091.6" cy="724.28" r="2.3"/><circle cx="1113.9" cy="726.4" r="2.3"/><circle cx="1130.9" cy="725.22" r="2.3"/><circle cx="1148.35" cy="726.49" r="2.3"/><circle cx="1161.81" cy="725.11" r="2.3"/><circle cx="1183.21" cy="726.23" r="2.3"/><circle cx="1196.34" cy="725.74" r="2.3"/><circle cx="1087" cy="734.79" r="2.3"/><circle cx="1103.66" cy="736.15" r="2.3"/><circle cx="1116.64" cy="736.34" r="2.3"/><circle cx="1140.95" cy="737.78" r="2.3"/><circle cx="1155.83" cy="734.83" r="2.3"/><circle cx="1172.88" cy="735.99" r="2.3"/><circle cx="1187.52" cy="737.53" r="2.3"/><circle cx="1201.67" cy="737" r="2.3"/><circle cx="1077.85" cy="745.38" r="2.3"/><circle cx="1096.59" cy="746.98" r="2.3"/><circle cx="1112.92" cy="749.52" r="2.3"/><circle cx="1127.05" cy="744.07" r="2.3"/><circle cx="1144.41" cy="748.07" r="2.3"/><circle cx="1160.62" cy="745.02" r="2.3"/><circle cx="1183.25" cy="747.96" r="2.3"/><circle cx="1196.54" cy="749.35" r="2.3"/><circle cx="1212.62" cy="748" r="2.3"/><circle cx="1083.59" cy="758.09" r="2.3"/><circle cx="1105.45" cy="760.99" r="2.3"/><circle cx="1123.04" cy="757.81" r="2.3"/><circle cx="1137.66" cy="757.4" r="2.3"/><circle cx="1151.09" cy="758.48" r="2.3"/><circle cx="1173.7" cy="760.59" r="2.3"/><circle cx="1189.69" cy="761.2" r="2.3"/><circle cx="1203.21" cy="756.51" r="2.3"/></g><g fill="none" stroke="#800080" stroke-width="1"><rect x="1071.5" y="229.5" width="147" height="535.5"/><path d="M1071 476.5 H1219 M1071 672.5 H1219"/></g><path d="M512.5 231 V313 M518.5 247 V283" stroke="#000080" stroke-width="1" fill="none"/><path d="M505 295.5 L512.5 314 L520 295.5 M515 275.5 L518.5 284 L522 275.5 M574 302.3 L535 318 M542.7 311.2 L535 318 L546 318" stroke="#000080" stroke-width="1.1" fill="none" shape-rendering="auto"/><g fill="#000080"><rect x="511" y="309" width="3" height="4"/><rect x="517" y="279" width="3" height="4"/></g><g font-size="11.5" fill="#0000ff"><text x="499" y="229.5">11,54</text><text x="508.5" y="245">1,94</text><text x="574" y="300.5">2,79</text></g><g font-size="11.5" fill="#0000ff"><text x="497.3" y="665.5">1</text><text x="499.3" y="635.5">2</text><text x="502.3" y="605.5">3</text><text x="504.3" y="576.5">4</text><text x="507.3" y="546.5">5</text><text x="510.3" y="516.5">6</text><text x="512.3" y="486.5">7</text><text x="515.3" y="457.5">8</text><text x="517.3" y="427.5">9</text><text x="514.1" y="397.5">10</text><text x="517.1" y="367.5">11</text><text x="519.1" y="338.5">12</text><text x="522.1" y="308.5">13</text></g></g></svg><div class="a" style="left:1227px;top:103px;width:1px;height:917px;background:#666666;"></div><div class="a" style="left:1228px;top:104px;width:157px;height:915px;background:#f0f0f0;"></div><div class="a" style="left:1231px;top:107px;width:151px;height:20px;background:#d4d4d4;"></div><div class="t" style="left:1234px;top:111.69px;font-size:11px;">Frames</div><div class="a" style="left:1368px;top:119px;width:6px;height:2px;background:#000;"></div><div class="t" style="left:1258px;top:136.69px;font-size:11px;">Project</div><div class="t" style="left:1258px;top:158.69px;font-size:11px;">Settings</div><div class="a" style="left:1237px;top:178px;width:139px;height:1px;background:#a0a0a0;"></div><div class="t" style="left:1258px;top:187.69px;font-size:11px;">Blocks</div><div class="t" style="left:1258px;top:209.69px;font-size:11px;">Geometry</div><div class="t" style="left:1258px;top:231.69px;font-size:11px;">Base</div><div class="a" style="left:1237px;top:251px;width:139px;height:1px;background:#a0a0a0;"></div><div class="t" style="left:1258px;top:260.69px;font-size:11px;">Profile</div><div class="t" style="left:1258px;top:282.69px;font-size:11px;">Soils</div><div class="t" style="left:1258px;top:304.69px;font-size:11px;">Assign</div><div class="a" style="left:1237px;top:324px;width:139px;height:1px;background:#a0a0a0;"></div><div class="t" style="left:1258px;top:333.69px;font-size:11px;">Types of reinforcements</div><div class="t" style="left:1258px;top:355.69px;font-size:11px;">Reinforcements</div><div class="t" style="left:1258px;top:377.69px;font-size:11px;">Terrain</div><div class="t" style="left:1258px;top:399.69px;font-size:11px;">Water</div><div class="t" style="left:1258px;top:421.69px;font-size:11px;">Surcharge</div><div class="t" style="left:1258px;top:443.69px;font-size:11px;">FF resistance</div><div class="t" style="left:1258px;top:465.69px;font-size:11px;">Applied forces</div><div class="t" style="left:1258px;top:487.69px;font-size:11px;">Earthquake</div><div class="t" style="left:1258px;top:509.69px;font-size:11px;">Stage settings</div><div class="a" style="left:1237px;top:529px;width:139px;height:1px;background:#a0a0a0;"></div><div class="t" style="left:1258px;top:538.69px;font-size:11px;">Verification</div><div class="a" style="left:1235px;top:556px;width:143px;height:20px;background:#cce4f7;border:1px solid #99d1ff"></div><div class="t" style="left:1258px;top:560.69px;font-size:11px;">Dimensioning</div><div class="t" style="left:1258px;top:582.69px;font-size:11px;">Bearing cap.</div><div class="t" style="left:1258px;top:604.69px;font-size:11px;">Slip on georeinf.</div><div class="t" style="left:1258px;top:626.69px;font-size:11px;">Internal stability</div><div class="t" style="left:1258px;top:648.69px;font-size:11px;">Stability</div><div class="a" style="left:1231px;top:821px;width:151px;height:20px;background:#d4d4d4;"></div><div class="t" style="left:1234px;top:825.69px;font-size:11px;">Outputs</div><div class="a" style="left:1368px;top:833px;width:6px;height:2px;background:#000;"></div><div class="a" style="left:1235px;top:845px;width:143px;height:22px;background:#e1e1e1;border:1px solid #adadad"></div><div class="t" style="left:1257px;top:851.19px;font-size:11px;">Add picture</div><div class="t" style="left:1235px;top:873.69px;font-size:11px;">Dimensioning :</div><div class="t" style="left:1371px;top:873.69px;font-size:11px;">0</div><div class="t" style="left:1235px;top:893.69px;font-size:11px;">Total :</div><div class="t" style="left:1371px;top:893.69px;font-size:11px;">0</div><div class="a" style="left:1235px;top:910px;width:143px;height:22px;background:#e1e1e1;border:1px solid #adadad"></div><div class="t" style="left:1257px;top:916.19px;font-size:11px;">List of pictures</div><div class="a" style="left:1237px;top:938px;width:139px;height:1px;background:#a0a0a0;"></div><div class="a" style="left:1235px;top:945px;width:69px;height:42px;background:#e1e1e1;border:1px solid #adadad"></div><div class="a" style="left:1310px;top:945px;width:68px;height:42px;background:#e1e1e1;border:1px solid #adadad"></div><div class="a" style="left:1235px;top:990px;width:143px;height:22px;background:#e1e1e1;border:1px solid #adadad"></div><div class="t" style="left:1257px;top:996.19px;font-size:11px;">Copy view</div><div class="a" style="left:1px;top:808px;width:1226px;height:1px;background:#666666;"></div><div class="a" style="left:1px;top:809px;width:1226px;height:210px;background:#f0f0f0;"></div><div class="a" style="left:4px;top:815px;width:20px;height:198px;background:#d4d4d4;"></div><div class="a" style="left:15px;top:823px;width:2px;height:5px;background:#000;"></div><div class="vt" style="left:9px;top:1015px;font-size:10.5px">Dimensioning</div><div class="t" style="left:30px;top:827.69px;font-size:11px;font-weight:bold;letter-spacing:0.2px">Dimensioning :</div><div class="a" style="left:118px;top:821px;width:23px;height:23px;background:#e1e1e1;border:1px solid #adadad"></div><div class="a" style="left:147px;top:821px;width:23px;height:23px;background:#cccccc;border:1px solid #bfbfbf"></div><div class="a" style="left:176px;top:821px;width:20px;height:23px;background:#cce4f7;border:1px solid #99d1ff"></div><div class="t" style="left:179px;top:827.69px;font-size:11px;">[1]</div><div class="a" style="left:32px;top:850px;width:1184px;height:1px;background:#a0a0a0;"></div><div class="a" style="left:1143px;top:821px;width:75px;height:23px;background:#e1e1e1;border:1px solid #adadad"></div><div class="t" style="left:1170px;top:827.69px;font-size:11px;">In detail</div><div class="a" style="left:30px;top:857px;width:566px;height:153px;background:#fff;border:1px solid #adadad"></div><div class="a" style="left:31px;top:858px;width:545px;height:36px;background:#f0f0f0;"></div><div class="a" style="left:32px;top:895px;width:51px;height:90px;background:#cccccc;"></div><div class="a" style="left:32px;top:986px;width:51px;height:22px;background:#f0f0f0;"></div><div class="a" style="left:82px;top:858px;width:3px;height:36px;background:#fff;"></div><div class="a" style="left:83px;top:858px;width:1px;height:127px;background:#000;"></div><div class="a" style="left:283px;top:858px;width:3px;height:36px;background:#fff;"></div><div class="a" style="left:284px;top:858px;width:1px;height:127px;background:#000;"></div><div class="a" style="left:356px;top:858px;width:3px;height:36px;background:#fff;"></div><div class="a" style="left:357px;top:858px;width:1px;height:127px;background:#000;"></div><div class="a" style="left:429px;top:858px;width:3px;height:36px;background:#fff;"></div><div class="a" style="left:430px;top:858px;width:1px;height:127px;background:#000;"></div><div class="a" style="left:502px;top:876px;width:3px;height:18px;background:#fff;"></div><div class="a" style="left:503px;top:876px;width:1px;height:109px;background:#000;"></div><div class="a" style="left:575px;top:858px;width:3px;height:36px;background:#fff;"></div><div class="a" style="left:576px;top:858px;width:1px;height:127px;background:#000;"></div><div class="a" style="left:32px;top:893px;width:545px;height:1px;background:#fff;"></div><div class="a" style="left:32px;top:894px;width:545px;height:1px;background:#000;"></div><div class="a" style="left:32px;top:984px;width:545px;height:1px;background:#000;"></div><div class="a" style="left:32px;top:912px;width:545px;height:1px;background:#a0a0a0;"></div><div class="a" style="left:32px;top:930px;width:545px;height:1px;background:#a0a0a0;"></div><div class="a" style="left:32px;top:948px;width:545px;height:1px;background:#a0a0a0;"></div><div class="a" style="left:32px;top:966px;width:545px;height:1px;background:#a0a0a0;"></div><div class="a" style="left:83px;top:912px;width:1px;height:72px;background:#000;"></div><div class="a" style="left:577px;top:858px;width:18px;height:151px;background:#f0f0f0;"></div><svg class="a" style="left:580px;top:898px" width="12" height="10" viewBox="0 0 12 10"><path d="M2 7 L6 3 L10 7" fill="none" stroke="#c0c0c0" stroke-width="1.3"/></svg><svg class="a" style="left:580px;top:994px" width="12" height="10" viewBox="0 0 12 10"><path d="M2 3 L6 7 L10 3" fill="none" stroke="#c0c0c0" stroke-width="1.3"/></svg><div class="t" style="left:57px;top:862.69px;font-size:11px;transform:translateX(-50%);">No.</div><div class="t" style="left:57px;top:880.69px;font-size:11px;transform:translateX(-50%);">of force</div><div class="t" style="left:183px;top:862.69px;font-size:11px;transform:translateX(-50%);">Force</div><div class="t" style="left:315.5px;top:863.19px;font-size:11px;">F<span style="font-size:9px;position:relative;top:2px">x</span></div><div class="t" style="left:388.5px;top:863.19px;font-size:11px;">F<span style="font-size:9px;position:relative;top:2px">z</span></div><div class="t" style="left:321px;top:881.19px;font-size:11px;transform:translateX(-50%);">[kN/m]</div><div class="t" style="left:394px;top:881.19px;font-size:11px;transform:translateX(-50%);">[kN/m]</div><div class="t" style="left:503px;top:863.19px;font-size:11px;transform:translateX(-50%);">Applic.Pt.</div><div class="t" style="left:466px;top:881.19px;font-size:11px;transform:translateX(-50%);">x [m]</div><div class="t" style="left:539px;top:881.19px;font-size:11px;transform:translateX(-50%);">z [m]</div><div class="t" style="left:61px;top:898.69px;font-size:11px;transform:translateX(-50%);color:#a0a0a0">1</div><div class="t" style="left:86px;top:898.69px;font-size:11px;">Weight - wall</div><div class="t" style="right:1032px;top:898.69px;font-size:11px;">0,00</div><div class="t" style="right:958px;top:898.69px;font-size:11px;">11,54</div><div class="t" style="right:885px;top:898.69px;font-size:11px;">0,37</div><div class="t" style="right:812px;top:898.69px;font-size:11px;">-0,41</div><div class="t" style="left:61px;top:916.69px;font-size:11px;transform:translateX(-50%);color:#a0a0a0">2</div><div class="t" style="left:86px;top:916.69px;font-size:11px;">Weight - earth wedge</div><div class="t" style="right:1032px;top:916.69px;font-size:11px;">0,00</div><div class="t" style="right:958px;top:916.69px;font-size:11px;">1,94</div><div class="t" style="right:885px;top:916.69px;font-size:11px;">0,46</div><div class="t" style="right:812px;top:916.69px;font-size:11px;">-0,88</div><div class="t" style="left:61px;top:934.69px;font-size:11px;transform:translateX(-50%);color:#a0a0a0">3</div><div class="t" style="left:86px;top:934.69px;font-size:11px;">Active pressure</div><div class="t" style="right:1032px;top:934.69px;font-size:11px;">-2,55</div><div class="t" style="right:958px;top:934.69px;font-size:11px;">1,13</div><div class="t" style="right:885px;top:934.69px;font-size:11px;">0,72</div><div class="t" style="right:812px;top:934.69px;font-size:11px;">-0,34</div><div class="t" style="left:61px;top:952.69px;font-size:11px;transform:translateX(-50%);color:#a0a0a0">4</div><div class="t" style="left:86px;top:952.69px;font-size:11px;">Water pressure</div><div class="t" style="right:1032px;top:952.69px;font-size:11px;">0,00</div><div class="t" style="right:958px;top:952.69px;font-size:11px;">0,00</div><div class="t" style="right:885px;top:952.69px;font-size:11px;">0,66</div><div class="t" style="right:812px;top:952.69px;font-size:11px;">-0,91</div><div class="t" style="left:61px;top:970.69px;font-size:11px;transform:translateX(-50%);color:#a0a0a0">5</div><div class="t" style="left:86px;top:970.69px;font-size:11px;">surcharge No. 1</div><div class="t" style="right:1032px;top:970.69px;font-size:11px;">0,00</div><div class="t" style="right:958px;top:970.69px;font-size:11px;">0,00</div><div class="t" style="right:885px;top:970.69px;font-size:11px;">0,66</div><div class="t" style="right:812px;top:970.69px;font-size:11px;">-1,01</div><svg class="a" style="left:37px;top:900px" width="8" height="8" viewBox="0 0 8 8"><path d="M1.5 1 L5 4 L1.5 7" fill="none" stroke="#909090" stroke-width="1.6"/></svg><svg class="a" style="left:611px;top:858px" width="13" height="13" viewBox="0 0 13 13"><rect x="0.5" y="0.5" width="12" height="12" fill="#fff" stroke="#333"/><path d="M2.5 6.5 L5 9 L10.5 3.5" fill="none" stroke="#333" stroke-width="1.3"/></svg><div class="t" style="left:629px;top:859.29px;font-size:11px;">Automatic verification</div><div class="t" style="left:611px;top:880.69px;font-size:11px;color:#a0a0a0">Block number :</div><div class="a" style="left:687px;top:875px;width:61px;height:21px;background:#f0f0f0;border:1px solid #7a7a7a"></div><div class="t" style="right:657px;top:880.69px;font-size:11px;color:#8a8a8a">12</div><svg class="a" style="left:733px;top:877px" width="13" height="17" viewBox="0 0 13 17"><path d="M3.5 6 L6.5 3 L9.5 6Z M3.5 11 L6.5 14 L9.5 11Z" fill="#888"/><path d="M0.5 0 V17 M0.5 8.5 H13" stroke="#d8d8d8"/></svg><div class="a" style="left:611px;top:912px;width:263px;height:60px;background:transparent;border:1px solid #c8c8c8"></div><div class="a" style="left:615px;top:905px;width:90px;height:13px;background:#f0f0f0;"></div><div class="t" style="left:625px;top:908.19px;font-size:11px;font-weight:bold">Dimensioning</div><div class="t" style="left:622px;top:929.69px;font-size:11px;font-weight:bold;letter-spacing:-0.2px">OVERTURNING</div><div class="t" style="left:719px;top:929.69px;font-size:11px;font-weight:bold;color:#008000;letter-spacing:0.1px">SATISFACTORY</div><div class="t" style="right:523.5px;top:929.27px;font-size:11.5px;">(24,7%)</div><div class="t" style="left:622px;top:949.69px;font-size:11px;font-weight:bold">SLIP</div><div class="t" style="left:719px;top:949.69px;font-size:11px;font-weight:bold;color:#008000;letter-spacing:0.1px">SATISFACTORY</div><div class="t" style="right:523.5px;top:949.27px;font-size:11.5px;">(4,7%)</div><div class="a" style="left:1px;top:1019px;width:1384px;height:1px;background:#d9d9d9;"></div><div class="a" style="left:1px;top:1020px;width:1384px;height:22px;background:#f0f0f0;"></div><svg class="a" style="left:1239px;top:134px" width="16" height="16" viewBox="0 0 16 16"><rect x="2.5" y="1.5" width="11" height="13" fill="#fff" stroke="#000" stroke-width="1.3"/><path d="M4.5 4.5H11.5M4.5 6.5H11.5M4.5 8.5H11.5M4.5 10.5H11.5M4.5 12.5H11.5" stroke="#000" stroke-width="0.9"/></svg><svg class="a" style="left:1239px;top:156px" width="16" height="16" viewBox="0 0 16 16"><path d="M12.73 6.38 L15.09 6.76 L15.09 9.24 L12.73 9.62 L12.49 10.20 L13.89 12.14 L12.14 13.89 L10.20 12.49 L9.62 12.73 L9.24 15.09 L6.76 15.09 L6.38 12.73 L5.80 12.49 L3.86 13.89 L2.11 12.14 L3.51 10.20 L3.27 9.62 L0.91 9.24 L0.91 6.76 L3.27 6.38 L3.51 5.80 L2.11 3.86 L3.86 2.11 L5.80 3.51 L6.38 3.27 L6.76 0.91 L9.24 0.91 L9.62 3.27 L10.20 3.51 L12.14 2.11 L13.89 3.86 L12.49 5.80Z" fill="#000"/><circle cx="8" cy="8" r="3.3" fill="#ffff00"/></svg><svg class="a" style="left:1239px;top:185px" width="16" height="16" viewBox="0 0 16 16"><rect x="2" y="5.5" width="10" height="5" fill="#ff00ff" stroke="#000" stroke-width="1.1"/></svg><svg class="a" style="left:1239px;top:207px" width="16" height="16" viewBox="0 0 16 16"><path d="M6 2.5H12L11.2 5.5H5.2Z M5.2 5.5H11.2L10.4 8.5H4.4Z M4.4 8.5H10.4L9.6 11.5H3.6Z M3.6 11.5H9.6L8.8 14.5H2.8Z" fill="#ff00ff" stroke="#000" stroke-width="1"/></svg><svg class="a" style="left:1239px;top:229px" width="16" height="16" viewBox="0 0 16 16"><path d="M6 2.5H11.5L10.8 5.5H5.2Z M5.2 5.5H10.8L10 8.5H4.4Z M4.4 8.5H10L9.4 11.5H3.6Z" fill="#fff" stroke="#000" stroke-width="1"/><rect x="2" y="11.5" width="8" height="3" fill="#ff00ff" stroke="#000" stroke-width="1"/></svg><svg class="a" style="left:1239px;top:258px" width="16" height="16" viewBox="0 0 16 16"><rect x="3" y="1.5" width="10" height="13" fill="#fff" stroke="#000" stroke-width="1.3"/><path d="M3 5.8H13M3 10.2H13" stroke="#000" stroke-width="1.1"/></svg><svg class="a" style="left:1239px;top:280px" width="16" height="16" viewBox="0 0 16 16"><rect x="3" y="1.5" width="10" height="13" fill="#ffff00" stroke="#000" stroke-width="1.3"/><path d="M3.5 8L8.5 2.5M3.5 12L12 3M5.5 14L12.5 6.5M9 14L12.5 10.5" stroke="#707000" stroke-width="0.8"/></svg><svg class="a" style="left:1239px;top:302px" width="16" height="16" viewBox="0 0 16 16"><rect x="3" y="1.5" width="10" height="13" fill="#000"/><rect x="4" y="2.5" width="8" height="3.2" fill="#008080"/><rect x="4" y="6.5" width="8" height="3.2" fill="#ffff00"/><rect x="4" y="10.5" width="8" height="3.2" fill="#00ffff"/></svg><svg class="a" style="left:1239px;top:331px" width="16" height="16" viewBox="0 0 16 16"><text x="1" y="6" font-size="6" font-weight="bold" font-family="Liberation Sans">?</text><path d="M2 14.5H6L8 12H10L11 9H12.5L13 4H15" fill="none" stroke="#000" stroke-width="1.5"/><path d="M5 13H9M6 10.5H11M7.5 8H12M9 5.5H12.5" stroke="#ff00ff" stroke-width="1.5"/></svg><svg class="a" style="left:1239px;top:353px" width="16" height="16" viewBox="0 0 16 16"><path d="M6 1.5H11V4.5H5Z M5 4.5H10V7.5H4Z M4 7.5H9V10.5H3Z M3 10.5H8V13.5H2Z" fill="#fff" stroke="#000" stroke-width="1"/><path d="M10.5 4H15M9.5 7H15M8.5 10H14.5" stroke="#ff00ff" stroke-width="1.3"/><path d="M10.5 5.2H15M9.5 8.2H15" stroke="#000" stroke-width="0.6"/></svg><svg class="a" style="left:1239px;top:375px" width="16" height="16" viewBox="0 0 16 16"><rect x="1.5" y="7.5" width="3" height="7" fill="#808080" stroke="#000" stroke-width="1.2"/><path d="M4 8L8 5.5H14.5" fill="none" stroke="#800000" stroke-width="1.6"/></svg><svg class="a" style="left:1239px;top:397px" width="16" height="16" viewBox="0 0 16 16"><rect x="1.5" y="2.5" width="3" height="12" fill="#808080" stroke="#000" stroke-width="1.2"/><rect x="4.5" y="4" width="10" height="10.5" fill="#00ffff"/><path d="M4 2.5H15" stroke="#800000" stroke-width="1"/><path d="M5 5H14.5" stroke="#0000ff" stroke-width="1.4" stroke-dasharray="2 1"/></svg><svg class="a" style="left:1239px;top:419px" width="16" height="16" viewBox="0 0 16 16"><rect x="1.5" y="6.5" width="3" height="8" fill="#808080" stroke="#000" stroke-width="1.2"/><rect x="4.5" y="2.5" width="9.5" height="3" fill="#0000ff"/><path d="M5 2H6M8 2H9M11 2H12" stroke="#0000ff" stroke-width="1"/><path d="M4 6.5H15" stroke="#800000" stroke-width="1.2"/></svg><svg class="a" style="left:1239px;top:441px" width="16" height="16" viewBox="0 0 16 16"><path d="M4.5 2V8" stroke="#0000ff" stroke-width="1.6"/><path d="M2 6L4.5 9L7 6Z" fill="#0000ff"/><path d="M1 11H11" stroke="#800000" stroke-width="1.6"/><rect x="11" y="2.5" width="3" height="8.5" fill="#808080" stroke="#000" stroke-width="1.2"/></svg><svg class="a" style="left:1239px;top:463px" width="16" height="16" viewBox="0 0 16 16"><path d="M8 1V8" stroke="#0000ff" stroke-width="1.6"/><path d="M5 6L8 10L11 6Z" fill="#0000ff"/><path d="M4 12H13" stroke="#0000ff" stroke-width="1.8"/><path d="M5 9L1 12L5 15Z" fill="#0000ff"/></svg><svg class="a" style="left:1239px;top:485px" width="16" height="16" viewBox="0 0 16 16"><rect x="5.5" y="1.5" width="4" height="6" fill="#808080" stroke="#000" stroke-width="1.1"/><path d="M1 8H14" stroke="#000" stroke-width="1.2"/><path d="M1.5 9.5L4 11.5L1.5 13.5M5.5 9.5L8 11.5L5.5 13.5M10 9.5L12.5 11.5L10 13.5" fill="none" stroke="#00c000" stroke-width="1.2"/></svg><svg class="a" style="left:1239px;top:507px" width="16" height="16" viewBox="0 0 16 16"><rect x="1" y="6.5" width="7" height="8" rx="1.5" fill="#ffff00" stroke="#000" stroke-width="1.2"/><rect x="7" y="1.5" width="7" height="8" rx="1.5" fill="#ffff00" stroke="#000" stroke-width="1.2"/><text x="2.8" y="13.6" font-size="7.5" font-family="Liberation Sans" font-weight="bold">1</text><text x="8.5" y="8.3" font-size="7.5" font-family="Liberation Sans" font-weight="bold">2</text></svg><svg class="a" style="left:1239px;top:536px" width="16" height="16" viewBox="0 0 16 16"><path d="M2.5 7.5V4.5L6.5 1.5L10.5 4.5V7.5" fill="none" stroke="#ff0000" stroke-width="1.6"/><path d="M1 6.5L2.5 8.5L4 6.5" fill="#ff0000"/><rect x="3" y="9" width="3" height="6" fill="#ffff00" stroke="#000" stroke-width="1"/><path d="M8 11.5H14" stroke="#ff0000" stroke-width="1.6"/><path d="M10 9L7 11.5L10 14" fill="#ff0000"/></svg><svg class="a" style="left:1239px;top:558px" width="16" height="16" viewBox="0 0 16 16"><path d="M7 2.5H13L10 14.5H4Z" fill="#ffff00" stroke="#000" stroke-width="1.2"/><path d="M3.5 9.5L13 7" stroke="#ff0000" stroke-width="1.5"/></svg><svg class="a" style="left:1239px;top:580px" width="16" height="16" viewBox="0 0 16 16"><rect x="2" y="3.5" width="12" height="4" fill="#ffff00" stroke="#000" stroke-width="1.1"/><rect x="2" y="7.5" width="12" height="2.5" fill="#ff0000"/><path d="M2.5 10V12.5M5 10V12M7.5 10V12.5M10 10V12M12.5 10V12.5" stroke="#ff0000" stroke-width="1.2"/><path d="M2 7.5H14" stroke="#000" stroke-width="0.8"/></svg><svg class="a" style="left:1239px;top:602px" width="16" height="16" viewBox="0 0 16 16"><rect x="2.5" y="3.5" width="3" height="11" fill="#ffff00" stroke="#000" stroke-width="1.1"/><path d="M5.5 10.5H13V2.5H5.5" fill="none" stroke="#ff0000" stroke-width="1.6"/><path d="M6 2.5H13" stroke="#800000" stroke-width="1.4"/><path d="M13 3V10" stroke="#808080" stroke-width="1.4"/></svg><svg class="a" style="left:1239px;top:624px" width="16" height="16" viewBox="0 0 16 16"><rect x="2.5" y="2.5" width="3" height="12" fill="#ffff00" stroke="#000" stroke-width="1.1"/><path d="M5.5 3H14L6 14" fill="none" stroke="#ff0000" stroke-width="1.4"/><path d="M5.5 6.5H11M5.5 9.5H9" stroke="#000" stroke-width="1.2"/></svg><svg class="a" style="left:1239px;top:646px" width="16" height="16" viewBox="0 0 16 16"><path d="M1.5 11C3 14 8 15 10 13L14.5 5H11" fill="none" stroke="#ff0000" stroke-width="1.5"/><path d="M1 10.5H8" stroke="#800000" stroke-width="1.3"/><rect x="6" y="5.5" width="3" height="5" fill="#ffff00" stroke="#000" stroke-width="1"/><path d="M9 5H14.5" stroke="#800000" stroke-width="1.4"/></svg><svg class="a" style="left:1239px;top:848px" width="17" height="17" viewBox="0 0 17 17"><rect x="0.5" y="0.5" width="15" height="16" fill="#e8e8e8" stroke="#555" stroke-width="1"/><path d="M3 3V13H7.5V9H4" fill="none" stroke="#111" stroke-width="1"/><path d="M3.5 3H6.5V6.5H3.5" fill="none" stroke="#111" stroke-width="1"/><path d="M11 2V8M8 5H14" stroke="#00a000" stroke-width="2"/></svg><svg class="a" style="left:1239px;top:913px" width="17" height="17" viewBox="0 0 17 17"><rect x="0.5" y="0.5" width="15" height="16" fill="#e8e8e8" stroke="#555" stroke-width="1"/><path d="M3 3V13H7.5V9H4" fill="none" stroke="#111" stroke-width="1"/><path d="M3.5 3H6.5V6.5H3.5" fill="none" stroke="#111" stroke-width="1"/><path d="M8 3H14M8 5H14M8 7H14" stroke="#111" stroke-width="0.9" stroke-dasharray="1.5 1"/></svg><svg class="a" style="left:1239px;top:993px" width="18" height="17" viewBox="0 0 18 17"><rect x="0.5" y="0.5" width="9" height="10" fill="#fff" stroke="#555"/><path d="M2.5 2.5V8.5H6V5.5H3" fill="none" stroke="#111" stroke-width="1"/><path d="M12 2V7M10.5 5.5L12 7.5L13.5 5.5" stroke="#00a000" stroke-width="1.2" fill="none"/><rect x="10.5" y="10.5" width="7" height="6" fill="#fff" stroke="#111"/><path d="M10.5 13H17.5" stroke="#111"/></svg><svg class="a" style="left:1257px;top:953px" width="26" height="25" viewBox="0 0 26 25"><rect x="5.5" y="0.5" width="14" height="6" fill="#fff" stroke="#333"/><path d="M0.5 5.5H24.5V17.5H0.5Z" fill="#c4aa7a" stroke="#333"/><path d="M2 9H23" stroke="#555" stroke-width="1"/><rect x="5.5" y="12.5" width="14" height="11" fill="#fff" stroke="#333"/><path d="M8 15H17M8 17H17M8 19H17M8 21H17" stroke="#111" stroke-width="0.9" stroke-dasharray="2 1"/></svg><svg class="a" style="left:1331px;top:953px" width="26" height="25" viewBox="0 0 26 25"><rect x="5.5" y="0.5" width="14" height="6" fill="#fff" stroke="#333"/><path d="M0.5 5.5H24.5V17.5H0.5Z" fill="#c4aa7a" stroke="#333"/><path d="M2 9H23" stroke="#555" stroke-width="1"/><rect x="5.5" y="12.5" width="14" height="11" fill="#fff" stroke="#333"/><path d="M8 15H17L13 20V22H11V20Z" fill="none" stroke="#ff0000" stroke-width="1.3"/><path d="M7.5 14V22H9" fill="none" stroke="#ff0000" stroke-width="1.3"/></svg><svg class="a" style="left:1151px;top:824px" width="18" height="18" viewBox="0 0 18 18"><path d="M1.5 3.5H9L12 6.5V16.5H1.5Z" fill="#fff" stroke="#222" stroke-width="1.2"/><path d="M3.5 9H8M3.5 11H8M3.5 13H8" stroke="#222" stroke-width="0.8" stroke-dasharray="1.5 0.8"/><circle cx="9" cy="6" r="4.5" fill="#20c0c0" stroke="#222" stroke-width="1.3"/><path d="M12 9.5L16.5 14" stroke="#222" stroke-width="2.2"/></svg><svg class="a" style="left:122px;top:825px" width="15" height="15" viewBox="0 0 15 15"><rect x="1" y="1" width="13" height="13" rx="3" fill="#fff" stroke="#1a9a1a" stroke-width="1.3"/><path d="M7.5 3.5V11.5M3.5 7.5H11.5" stroke="#1a9a1a" stroke-width="2"/></svg><svg class="a" style="left:151px;top:825px" width="15" height="15" viewBox="0 0 15 15"><rect x="1" y="1" width="13" height="13" rx="3" fill="#d8d8d8" stroke="#a8a8a8" stroke-width="1.3"/><path d="M3.5 7.5H11.5" stroke="#a8a8a8" stroke-width="2"/></svg><div class="a" style="left:1381px;top:1032px;width:2px;height:2px;background:#a8a8a8;"></div><div class="a" style="left:1378px;top:1035px;width:2px;height:2px;background:#a8a8a8;"></div><div class="a" style="left:1381px;top:1035px;width:2px;height:2px;background:#a8a8a8;"></div><div class="a" style="left:1375px;top:1038px;width:2px;height:2px;background:#a8a8a8;"></div><div class="a" style="left:1378px;top:1038px;width:2px;height:2px;background:#a8a8a8;"></div><div class="a" style="left:1381px;top:1038px;width:2px;height:2px;background:#a8a8a8;"></div></body></html>
